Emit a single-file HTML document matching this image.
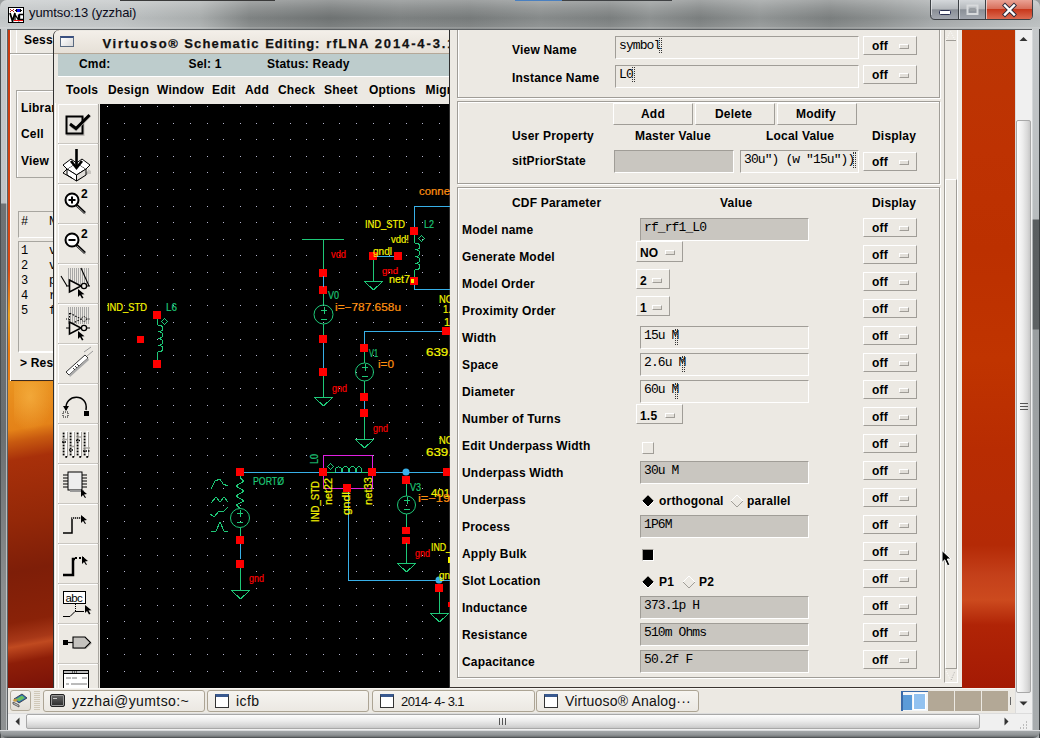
<!DOCTYPE html><html><head><meta charset="utf-8"><style>
*{margin:0;padding:0;box-sizing:border-box}
html,body{width:1040px;height:738px;overflow:hidden;background:#9a9e9f;font-family:"Liberation Sans",sans-serif}
div{position:absolute}
.t{white-space:pre;color:#000}
.b12{font:bold 12px/12px "Liberation Sans",sans-serif;letter-spacing:0.2px}
.m11{font:13px/12px "Liberation Mono",monospace;letter-spacing:-0.9px}
.r13{font:13px/13px "Liberation Sans",sans-serif}
</style></head><body><div style="left:0;top:0;width:1040px;height:738px;overflow:hidden">
<div style="left:0px;top:0px;width:1040px;height:738px;background:#9ea2a3;border-radius:7px 7px 0 0"></div>
<div style="left:0px;top:0px;width:1040px;height:30px;border-radius:7px 7px 0 0;background:linear-gradient(90deg,#c2c6c7 0,#bcc0c1 120px,#a8acac 200px,#7e8282 250px,#6e7272 330px,#7c8080 400px,#767a7a 470px,#868a8a 540px,#7a7e7e 610px,#8c9090 650px,#7a7e7e 700px,#909494 760px,#7a7e7e 830px,#8a8e8e 880px,#a0a4a5 930px,#b8bcbd 1040px)"></div>
<div style="left:0px;top:0px;width:1040px;height:30px;border-radius:7px 7px 0 0;background:linear-gradient(rgba(255,255,255,.3) 0,rgba(255,255,255,.15) 8px,rgba(255,255,255,0) 18px,rgba(255,255,255,.1) 27px,rgba(255,255,255,.35) 28px,rgba(255,255,255,0) 29px)"></div>
<div style="left:120px;top:0px;width:155px;height:1px;background:#3a3a3a"></div>
<div style="left:515px;top:0px;width:47px;height:1px;background:#4a80c0"></div>
<div style="left:562px;top:0px;width:110px;height:1px;background:#404244"></div>
<svg style="position:absolute;left:8px;top:7px" width="16" height="16" shape-rendering="crispEdges"><rect x="0.5" y="0.5" width="15" height="15" fill="#fff" stroke="#000"/><path d="M2,2h1M5,2h1M3,3h2M2,4h1M5,4h1" stroke="#b02020"/><path d="M7,3h2M12,3h2M8,2h5M8,4h5" stroke="#000"/><rect x="9" y="2" width="3" height="3" fill="#1010f0"/><path d="M2,6L4.5,14L7,6" fill="none" stroke="#000" stroke-width="1.8" shape-rendering="auto"/><path d="M7,13V7.5L10.5,13V7.5" fill="none" stroke="#000" stroke-width="1.3" shape-rendering="auto"/><path d="M15,7.5H11.5V12.5H15" fill="none" stroke="#000" stroke-width="1.4" shape-rendering="auto"/><rect x="6" y="13" width="9" height="1" fill="#f01010"/></svg>
<div class="t r13" style="left:29px;top:6px;color:#0a0a1a;letter-spacing:-0.1px">yumtso:13 (yzzhai)</div>
<svg style="position:absolute;left:928px;top:0" width="108" height="22"><defs><linearGradient id="cg" x1="0" y1="0" x2="0" y2="1"><stop offset="0" stop-color="#d4d7da"/><stop offset=".45" stop-color="#b4b8bc"/><stop offset=".5" stop-color="#8a8f96"/><stop offset="1" stop-color="#a4a8b0"/></linearGradient><linearGradient id="rg" x1="0" y1="0" x2="0" y2="1"><stop offset="0" stop-color="#eaa294"/><stop offset=".45" stop-color="#d8705c"/><stop offset=".5" stop-color="#c8381c"/><stop offset="1" stop-color="#dc6a50"/></linearGradient></defs><path d="M2.5,0 V15 Q2.5,19.5 7,19.5 H101 Q104.5,19.5 104.5,15 V0" fill="url(#cg)" stroke="#3c4044"/><path d="M57.5,0 V19 H101 Q104,19 104,15 V0Z" fill="url(#rg)"/><path d="M30.5,0V19.5 M57.5,0V19.5" stroke="#3c4044"/><path d="M31.5,0V19 M3.5,0V15 M58.5,0V19" stroke="#e8eaec" stroke-opacity=".7"/><rect x="11.5" y="10.5" width="11" height="4" rx="1" fill="#fff" stroke="#2a3050"/><rect x="39.5" y="5.5" width="10" height="8.5" fill="none" stroke="#d8dadc" stroke-width="2"/><rect x="41.5" y="8" width="6" height="3" fill="#9a9ea2"/><path d="M77,5.5 L86,14.5 M86,5.5 L77,14.5" stroke="#2a2a3a" stroke-width="4.2" stroke-linecap="square"/><path d="M77,5.5 L86,14.5 M86,5.5 L77,14.5" stroke="#fff" stroke-width="2.4" stroke-linecap="square"/></svg>
<div style="left:7px;top:29px;width:1026px;height:702px;background:#5c6063"></div>
<div style="left:8px;top:30px;width:1024px;height:700px;background:linear-gradient(90deg,#b23a12,#b93208)"></div>
<div style="left:8px;top:30px;width:3px;height:360px;background:linear-gradient(#c83a10 0,#d84a14 240px,#e8a020 285px,#e87a10 320px,#e8801a 100%)"></div>
<div style="left:8px;top:380px;width:46px;height:310px;background:linear-gradient(170deg,#ea9420 0,#e48218 50px,#c85a10 62px,#a8300a 80px,#942808 140px,#7e1e08 190px,#8a2208 240px,#a83818 258px,#c04a20 264px,#8e1e08 280px,#7a1208 310px)"></div>
<div style="left:14px;top:382px;width:40px;height:50px;background:radial-gradient(ellipse at 40% 30%,rgba(255,200,90,.45),rgba(255,200,90,0) 70%)"></div>
<div style="left:10px;top:30px;width:48px;height:351px;overflow:hidden;"><div style="left:-10px;top:-30px;width:1040px;height:738px">
<div style="left:10px;top:30px;width:48px;height:351px;background:#ece9e3;border-bottom:1px solid #3a2a20"></div>
<div style="left:10px;top:30px;width:1px;height:351px;background:#fff"></div>
<div class="t b12" style="left:24px;top:34px;">Sess</div>
<div style="left:16px;top:30px;width:1px;height:23px;background:#fff"></div>
<div style="left:10px;top:53px;width:44px;height:1px;background:#a8a6a0"></div>
<div style="left:10px;top:54px;width:44px;height:1px;background:#fff"></div>
<div style="left:16px;top:90px;width:38px;height:88px;border:1px solid #a8a6a0;border-right:none;box-shadow:inset 1px 1px 0 #fff"></div>
<div class="t b12" style="left:21px;top:102px;">Librar</div>
<div class="t b12" style="left:21px;top:128px;">Cell</div>
<div class="t b12" style="left:21px;top:155px;">View</div>
<div style="left:18px;top:211px;width:36px;height:27px;border:1px solid #a8a6a0;border-right:none;border-bottom:1px solid #fff"></div>
<div class="t m11" style="left:21px;top:216px;font-size:12px;line-height:12px;letter-spacing:-0.2px">#   N</div>
<div style="left:18px;top:241px;width:36px;height:112px;border:1px solid #a8a6a0;border-right:none;border-bottom:2px solid #fff"></div>
<div class="t m11" style="left:21px;top:245px;font-size:12px;line-height:12px;letter-spacing:-0.2px">1   v</div>
<div class="t m11" style="left:21px;top:260px;font-size:12px;line-height:12px;letter-spacing:-0.2px">2   v</div>
<div class="t m11" style="left:21px;top:275px;font-size:12px;line-height:12px;letter-spacing:-0.2px">3   p</div>
<div class="t m11" style="left:21px;top:290px;font-size:12px;line-height:12px;letter-spacing:-0.2px">4   r</div>
<div class="t m11" style="left:21px;top:305px;font-size:12px;line-height:12px;letter-spacing:-0.2px">5   f</div>
<div class="t b12" style="left:20px;top:357px;">> Res</div>
</div></div>
<div style="left:53px;top:30px;width:398px;height:659px;background:#ece9e3;border-left:1px solid #303030;border-radius:6px 0 0 0"></div>
<div style="left:54px;top:31px;width:396px;height:23px;background:linear-gradient(#f3efe9,#e6e0d7);border-bottom:1px solid #b5a898;border-radius:5px 0 0 0"></div>
<div style="left:60px;top:36px;width:14px;height:11px;background:linear-gradient(135deg,#fff,#d8d8d8);border:1px solid #5a6a80;border-top:2px solid #3a5080"></div>
<div class="t b12" style="left:102.5px;top:37px;font-size:13px;line-height:13px;letter-spacing:1.67px;color:#111;-webkit-text-stroke:0.25px #111">Virtuoso®</div>
<div class="t b12" style="left:184.3px;top:37px;font-size:13px;line-height:13px;letter-spacing:1.13px;color:#111;-webkit-text-stroke:0.25px #111">Schematic</div>
<div class="t b12" style="left:265.3px;top:37px;font-size:13px;line-height:13px;letter-spacing:0.8px;color:#111;-webkit-text-stroke:0.25px #111">Editing:</div>
<div class="t b12" style="left:326.2px;top:37px;font-size:13px;line-height:13px;letter-spacing:1.5px;color:#111;-webkit-text-stroke:0.25px #111">rfLNA</div>
<div class="t b12" style="left:374.7px;top:37px;font-size:13px;line-height:13px;letter-spacing:1.88px;color:#111;-webkit-text-stroke:0.25px #111">2014-4-3.1</div>
<div style="left:58px;top:54px;width:392px;height:22px;background:#bdcccc"></div>
<div class="t b12" style="left:79px;top:58px;">Cmd:</div>
<div class="t b12" style="left:188.5px;top:58px;">Sel: 1</div>
<div class="t b12" style="left:267px;top:58px;">Status: Ready</div>
<div style="left:58px;top:76px;width:392px;height:27px;background:#ece9e3;border-top:1px solid #fff"></div>
<div class="t b12" style="left:66px;top:84px;">Tools</div>
<div class="t b12" style="left:108px;top:84px;">Design</div>
<div class="t b12" style="left:157px;top:84px;">Window</div>
<div class="t b12" style="left:212px;top:84px;">Edit</div>
<div class="t b12" style="left:245px;top:84px;">Add</div>
<div class="t b12" style="left:278px;top:84px;">Check</div>
<div class="t b12" style="left:324px;top:84px;">Sheet</div>
<div class="t b12" style="left:369px;top:84px;">Options</div>
<div class="t b12" style="left:425.5px;top:84px;">Migr</div>
<div style="left:54px;top:103px;width:46px;height:586px;background:#ece9e3"></div>
<div style="left:55px;top:103px;width:1px;height:586px;background:#fff"></div>
<svg style="position:absolute;left:54px;top:103px" width="46" height="585"><g transform="translate(-54,-103)"><rect x="58.5" y="103.5" width="39" height="40" fill="#ece9e3" stroke="none"/><path d="M58.5,143 V104.5 H97.5" fill="none" stroke="#fff"/><path d="M58,143.5 H98.5 V104" fill="none" stroke="#a8a59f"/><rect x="58.5" y="143.5" width="39" height="40" fill="#ece9e3" stroke="none"/><path d="M58.5,183 V144.5 H97.5" fill="none" stroke="#fff"/><path d="M58,183.5 H98.5 V144" fill="none" stroke="#a8a59f"/><rect x="58.5" y="183.5" width="39" height="40" fill="#ece9e3" stroke="none"/><path d="M58.5,223 V184.5 H97.5" fill="none" stroke="#fff"/><path d="M58,223.5 H98.5 V184" fill="none" stroke="#a8a59f"/><rect x="58.5" y="223.5" width="39" height="40" fill="#ece9e3" stroke="none"/><path d="M58.5,263 V224.5 H97.5" fill="none" stroke="#fff"/><path d="M58,263.5 H98.5 V224" fill="none" stroke="#a8a59f"/><rect x="58.5" y="263.5" width="39" height="40" fill="#ece9e3" stroke="none"/><path d="M58.5,303 V264.5 H97.5" fill="none" stroke="#fff"/><path d="M58,303.5 H98.5 V264" fill="none" stroke="#a8a59f"/><rect x="58.5" y="303.5" width="39" height="40" fill="#ece9e3" stroke="none"/><path d="M58.5,343 V304.5 H97.5" fill="none" stroke="#fff"/><path d="M58,343.5 H98.5 V304" fill="none" stroke="#a8a59f"/><rect x="58.5" y="343.5" width="39" height="40" fill="#ece9e3" stroke="none"/><path d="M58.5,383 V344.5 H97.5" fill="none" stroke="#fff"/><path d="M58,383.5 H98.5 V344" fill="none" stroke="#a8a59f"/><rect x="58.5" y="383.5" width="39" height="40" fill="#ece9e3" stroke="none"/><path d="M58.5,423 V384.5 H97.5" fill="none" stroke="#fff"/><path d="M58,423.5 H98.5 V384" fill="none" stroke="#a8a59f"/><rect x="58.5" y="423.5" width="39" height="40" fill="#ece9e3" stroke="none"/><path d="M58.5,463 V424.5 H97.5" fill="none" stroke="#fff"/><path d="M58,463.5 H98.5 V424" fill="none" stroke="#a8a59f"/><rect x="58.5" y="463.5" width="39" height="40" fill="#ece9e3" stroke="none"/><path d="M58.5,503 V464.5 H97.5" fill="none" stroke="#fff"/><path d="M58,503.5 H98.5 V464" fill="none" stroke="#a8a59f"/><rect x="58.5" y="503.5" width="39" height="40" fill="#ece9e3" stroke="none"/><path d="M58.5,543 V504.5 H97.5" fill="none" stroke="#fff"/><path d="M58,543.5 H98.5 V504" fill="none" stroke="#a8a59f"/><rect x="58.5" y="543.5" width="39" height="40" fill="#ece9e3" stroke="none"/><path d="M58.5,583 V544.5 H97.5" fill="none" stroke="#fff"/><path d="M58,583.5 H98.5 V544" fill="none" stroke="#a8a59f"/><rect x="58.5" y="583.5" width="39" height="40" fill="#ece9e3" stroke="none"/><path d="M58.5,623 V584.5 H97.5" fill="none" stroke="#fff"/><path d="M58,623.5 H98.5 V584" fill="none" stroke="#a8a59f"/><rect x="58.5" y="623.5" width="39" height="40" fill="#ece9e3" stroke="none"/><path d="M58.5,663 V624.5 H97.5" fill="none" stroke="#fff"/><path d="M58,663.5 H98.5 V624" fill="none" stroke="#a8a59f"/><rect x="58.5" y="663.5" width="39" height="40" fill="#ece9e3" stroke="none"/><path d="M58.5,703 V664.5 H97.5" fill="none" stroke="#fff"/><path d="M58,703.5 H98.5 V664" fill="none" stroke="#a8a59f"/><g transform="translate(58,103)"><g transform="translate(0,1.5)"><rect x="9.5" y="13.5" width="16" height="17" fill="none" stroke="#c0bdb8" stroke-width="2"/><rect x="8.5" y="12" width="16" height="17" fill="#e4e1dc" stroke="#000" stroke-width="2"/><path d="M13,21 L18,25 L32,11" fill="none" stroke="#b0ada8" stroke-width="3"/><path d="M12,19.5 L18,24 L31.5,10.5" fill="none" stroke="#000" stroke-width="3"/></g></g><g transform="translate(58,143)"><path d="M20,34 L30,28 L30,31 L20,38Z" fill="#b8b5b0"/><path d="M30,26 L33,28 L33,31 L30,31Z" fill="#c8c5c0"/><path d="M9,26 L18.5,20 L28,26 L18.5,32Z" fill="#fff" stroke="#000"/><path d="M9,26 L18.5,32 L18.5,38 L9,32Z" fill="#fff" stroke="#000"/><path d="M18.5,32 L28,26 L28,32 L18.5,38Z" fill="#e0ddd8" stroke="#000"/><path d="M9,26 L5,22 L13,16 L18.5,20" fill="#fff" stroke="#000"/><path d="M28,26 L32,22 L24,16 L18.5,20" fill="#fff" stroke="#000"/><path d="M9,26 L5,30 L14,35" fill="none" stroke="#000"/><path d="M18.5,6 V24" stroke="#000" stroke-width="2.6"/><path d="M13,18 L18.5,25 L24,18" fill="none" stroke="#000" stroke-width="2.6"/></g><g transform="translate(58,183)"><circle cx="14" cy="17" r="6.5" fill="#fff" stroke="#000" stroke-width="2"/><path d="M18.5,22 L27,30" stroke="#000" stroke-width="2.5"/><path d="M19,23 L27.5,31" stroke="#999" stroke-width="1"/><path d="M10.5,17 H17.5" stroke="#000" stroke-width="2"/><path d="M14,13.5 V20.5" stroke="#000" stroke-width="2"/><text x="23" y="15" font-family="Liberation Sans" font-weight="bold" font-size="12" fill="#000">2</text></g><g transform="translate(58,223)"><circle cx="14" cy="17" r="6.5" fill="#fff" stroke="#000" stroke-width="2"/><path d="M18.5,22 L27,30" stroke="#000" stroke-width="2.5"/><path d="M19,23 L27.5,31" stroke="#999" stroke-width="1"/><path d="M10.5,17 H17.5" stroke="#000" stroke-width="2"/><text x="23" y="15" font-family="Liberation Sans" font-weight="bold" font-size="12" fill="#000">2</text></g><g transform="translate(58,263)"><line x1="10.5" y1="5" x2="10.5" y2="23" stroke="#a0a0a0" stroke-width="0.9"/><line x1="12.5" y1="5" x2="12.5" y2="23" stroke="#a0a0a0" stroke-width="0.9"/><line x1="14.5" y1="5" x2="14.5" y2="23" stroke="#a0a0a0" stroke-width="0.9"/><line x1="16.5" y1="5" x2="16.5" y2="23" stroke="#a0a0a0" stroke-width="0.9"/><line x1="18.5" y1="5" x2="18.5" y2="23" stroke="#a0a0a0" stroke-width="0.9"/><line x1="20.5" y1="5" x2="20.5" y2="23" stroke="#a0a0a0" stroke-width="0.9"/><line x1="22.5" y1="5" x2="22.5" y2="23" stroke="#a0a0a0" stroke-width="0.9"/><line x1="24.5" y1="5" x2="24.5" y2="23" stroke="#a0a0a0" stroke-width="0.9"/><line x1="26.5" y1="5" x2="26.5" y2="23" stroke="#a0a0a0" stroke-width="0.9"/><line x1="28.5" y1="5" x2="28.5" y2="23" stroke="#a0a0a0" stroke-width="0.9"/><line x1="30.5" y1="5" x2="30.5" y2="23" stroke="#a0a0a0" stroke-width="0.9"/><path d="M3,13 L9,23 M23,5 L31,23" stroke="#000" stroke-width="1.1"/><path d="M11.5,17 V29 L23,23Z" fill="#ece9e3" stroke="#000" stroke-width="1.6"/><circle cx="26" cy="23" r="2.6" fill="#ece9e3" stroke="#000" stroke-width="1.3"/><path d="M8,23 H11 M28.5,23 H32" stroke="#000" stroke-width="1.2"/><path d="M20,26 L20,34 L22,32 L24,35.5 L25.5,34.8 L23.5,31.5 L26.5,31.2Z" fill="#000"/></g><g transform="translate(58,303)"><line x1="10.5" y1="4" x2="10.5" y2="21" stroke="#a0a0a0" stroke-width="0.9"/><line x1="12.5" y1="4" x2="12.5" y2="21" stroke="#a0a0a0" stroke-width="0.9"/><line x1="14.5" y1="4" x2="14.5" y2="21" stroke="#a0a0a0" stroke-width="0.9"/><line x1="16.5" y1="4" x2="16.5" y2="21" stroke="#a0a0a0" stroke-width="0.9"/><line x1="18.5" y1="4" x2="18.5" y2="21" stroke="#a0a0a0" stroke-width="0.9"/><line x1="20.5" y1="4" x2="20.5" y2="21" stroke="#a0a0a0" stroke-width="0.9"/><line x1="22.5" y1="4" x2="22.5" y2="21" stroke="#a0a0a0" stroke-width="0.9"/><line x1="24.5" y1="4" x2="24.5" y2="21" stroke="#a0a0a0" stroke-width="0.9"/><line x1="26.5" y1="4" x2="26.5" y2="21" stroke="#a0a0a0" stroke-width="0.9"/><line x1="28.5" y1="4" x2="28.5" y2="21" stroke="#a0a0a0" stroke-width="0.9"/><line x1="30.5" y1="4" x2="30.5" y2="21" stroke="#a0a0a0" stroke-width="0.9"/><path d="M11.5,10 V22 L23,16Z" fill="none" stroke="#000" stroke-width="1.1" stroke-dasharray="1.5,1.5"/><circle cx="26" cy="16" r="2.4" fill="none" stroke="#000" stroke-dasharray="1,1"/><path d="M8,16 H11 M28.5,16 H32" stroke="#000" stroke-dasharray="1,1"/><path d="M11.5,19 V31 L23,25Z" fill="#ece9e3" stroke="#000" stroke-width="1.6"/><circle cx="26" cy="25" r="2.6" fill="#ece9e3" stroke="#000" stroke-width="1.3"/><path d="M8,25 H11 M28.5,25 H32" stroke="#000" stroke-width="1.2"/><path d="M20,28 L20,36 L22,34 L24,37.5 L25.5,36.8 L23.5,33.5 L26.5,33.2Z" fill="#000"/></g><g transform="translate(58,343)"><path d="M8,29 L27,12 L30,15 L11,32Z" fill="#fff" stroke="#333"/><path d="M11,32 L30,15 L31,17 L12,34Z" fill="#aaa"/><path d="M26,9 L33,4 M29,13 L35,8" stroke="#999"/><path d="M15,25 l2,2 M17,23 l2,2 M19,21 l2,2" stroke="#333"/></g><g transform="translate(58,383)"><path d="M8,27 C6,10 31,10 28,27" fill="none" stroke="#000" stroke-width="1.5"/><path d="M5,23 L8,28 L11,23Z" fill="#000"/><rect x="5" y="29" width="5" height="5" fill="none" stroke="#000" stroke-dasharray="1,1"/><rect x="26" y="28" width="5" height="5" fill="#000"/></g><g transform="translate(58,423)"><rect x="7.5" y="8" width="2" height="26" fill="#fff"/><rect x="9.0" y="9" width="1" height="25" fill="#a8a5a0"/><rect x="4.7" y="9.6" width="1.8" height="1.8" fill="#000"/><rect x="4.7" y="12.6" width="1.8" height="1.8" fill="#000"/><rect x="4.7" y="15.6" width="1.8" height="1.8" fill="#000"/><rect x="4.7" y="18.6" width="1.8" height="1.8" fill="#000"/><rect x="4.7" y="21.6" width="1.8" height="1.8" fill="#000"/><rect x="4.7" y="24.6" width="1.8" height="1.8" fill="#000"/><rect x="4.7" y="27.6" width="1.8" height="1.8" fill="#000"/><rect x="4.7" y="30.6" width="1.8" height="1.8" fill="#000"/><rect x="7.3" y="33" width="1.8" height="1.8" fill="#000"/><rect x="14.5" y="8" width="2" height="26" fill="#fff"/><rect x="16.0" y="9" width="1" height="25" fill="#a8a5a0"/><rect x="11.7" y="9.6" width="1.8" height="1.8" fill="#000"/><rect x="11.7" y="12.6" width="1.8" height="1.8" fill="#000"/><rect x="11.7" y="15.6" width="1.8" height="1.8" fill="#000"/><rect x="11.7" y="18.6" width="1.8" height="1.8" fill="#000"/><rect x="11.7" y="21.6" width="1.8" height="1.8" fill="#000"/><rect x="11.7" y="24.6" width="1.8" height="1.8" fill="#000"/><rect x="11.7" y="27.6" width="1.8" height="1.8" fill="#000"/><rect x="11.7" y="30.6" width="1.8" height="1.8" fill="#000"/><rect x="14.3" y="33" width="1.8" height="1.8" fill="#000"/><rect x="21.5" y="8" width="2" height="26" fill="#fff"/><rect x="23.0" y="9" width="1" height="25" fill="#a8a5a0"/><rect x="18.7" y="9.6" width="1.8" height="1.8" fill="#000"/><rect x="18.7" y="12.6" width="1.8" height="1.8" fill="#000"/><rect x="18.7" y="15.6" width="1.8" height="1.8" fill="#000"/><rect x="18.7" y="18.6" width="1.8" height="1.8" fill="#000"/><rect x="18.7" y="21.6" width="1.8" height="1.8" fill="#000"/><rect x="18.7" y="24.6" width="1.8" height="1.8" fill="#000"/><rect x="18.7" y="27.6" width="1.8" height="1.8" fill="#000"/><rect x="18.7" y="30.6" width="1.8" height="1.8" fill="#000"/><rect x="21.3" y="33" width="1.8" height="1.8" fill="#000"/><rect x="28.5" y="8" width="2" height="26" fill="#fff"/><rect x="30.0" y="9" width="1" height="25" fill="#a8a5a0"/><rect x="25.7" y="9.6" width="1.8" height="1.8" fill="#000"/><rect x="25.7" y="12.6" width="1.8" height="1.8" fill="#000"/><rect x="25.7" y="15.6" width="1.8" height="1.8" fill="#000"/><rect x="25.7" y="18.6" width="1.8" height="1.8" fill="#000"/><rect x="25.7" y="21.6" width="1.8" height="1.8" fill="#000"/><rect x="25.7" y="24.6" width="1.8" height="1.8" fill="#000"/><rect x="25.7" y="27.6" width="1.8" height="1.8" fill="#000"/><rect x="25.7" y="30.6" width="1.8" height="1.8" fill="#000"/><rect x="28.3" y="33" width="1.8" height="1.8" fill="#000"/><path d="M5,16.5 H10 M12,23.5 H17 M19,14 H24 M26,25 H32" stroke="#a8a5a0" stroke-width="1.5"/><path d="M4,19 H9 M11,27 H16 M18,17.5 H23 M25,28 H32" stroke="#000" stroke-width="1.6" stroke-dasharray="1.5,1"/></g><g transform="translate(58,463)"><rect x="10" y="9" width="14" height="18" fill="#eee" stroke="#000" stroke-width="1"/><rect x="12" y="27" width="14" height="2" fill="#999"/><path d="M5,12 H10 M24,12 H29" stroke="#000"/><path d="M5,15 H10 M24,15 H29" stroke="#000"/><path d="M5,18 H10 M24,18 H29" stroke="#000"/><path d="M5,21 H10 M24,21 H29" stroke="#000"/><path d="M5,24 H10 M24,24 H29" stroke="#000"/><path d="M23,26 L23,34 L25,32 L27,35 L28,34.5 L26,31.5 L29,31Z" fill="#000"/></g><g transform="translate(58,503)"><path d="M5,30 H14 V15 H26" fill="none" stroke="#000" stroke-width="1.5"/><path d="M14,15 H26" stroke="#ece9e3" stroke-width="1.5" stroke-dasharray="1,1"/><path d="M23,12 L23,20 L25,18 L27,21 L28,20.5 L26,17.5 L29,17Z" fill="#000"/></g><g transform="translate(58,543)"><path d="M5,32 H15 V16 H17" fill="none" stroke="#000" stroke-width="2.5"/><path d="M17,15 H26" stroke="#000" stroke-width="2" stroke-dasharray="2,2"/><path d="M24,13 L24,21 L26,19 L28,22 L29,21.5 L27,18.5 L30,18Z" fill="#000"/></g><g transform="translate(58,583)"><rect x="5.5" y="8.5" width="22" height="12" fill="#fff" stroke="#000"/><text x="7.5" y="18.5" font-family="Liberation Sans" font-size="11.5" letter-spacing="-0.6" fill="#000">abc</text><path d="M17.5,21 V28" stroke="#000" stroke-dasharray="1,1"/><path d="M5,33.5 H12 L17,28.5 H26" fill="none" stroke="#000"/><path d="M27,22 L27,30 L29,28 L31,31.5 L32.5,30.8 L30.5,27.5 L33.5,27.2Z" fill="#000"/></g><g transform="translate(58,623)"><path d="M16,15 H28 L34,20.5 L28,26 H16Z" fill="#b8b5b0"/><rect x="5" y="17" width="5" height="5" fill="#000"/><path d="M10,19.5 H15" stroke="#000" stroke-width="1.2"/><path d="M15,14 H27 L32.5,19.5 L27,25 H15Z" fill="#c4c2be" stroke="#000" stroke-width="1.1"/></g><g transform="translate(58,663)"><rect x="5.5" y="7.5" width="25" height="30" fill="#fff" stroke="#000"/><rect x="5.5" y="7.5" width="25" height="3" fill="#bbb" stroke="#000"/><path d="M14,9 h1 M16,9 h1 M18,9 h1" stroke="#000"/><path d="M8,15 H13 M14,15 H19 M24,15 H29 M8,21 H11 M13,21 H29 M8,26 H11 M13,26 H29" stroke="#777"/></g></g></svg>
<div style="left:100px;top:104px;width:349px;height:584px;background:#000"></div>
<div style="left:449px;top:30px;width:1px;height:658px;background:#2e2e2e"></div>
<svg style="position:absolute;left:100px;top:104px" width="350" height="584"><g transform="translate(-100,-104)" shape-rendering="crispEdges"><rect x="107" y="106" width="1" height="1" fill="#ffffff"/><rect x="124" y="106" width="1" height="1" fill="#b4b4cc"/><rect x="140" y="106" width="1" height="1" fill="#b4b4cc"/><rect x="157" y="106" width="1" height="1" fill="#b4b4cc"/><rect x="173" y="106" width="1" height="1" fill="#b4b4cc"/><rect x="190" y="106" width="1" height="1" fill="#b4b4cc"/><rect x="207" y="106" width="1" height="1" fill="#b4b4cc"/><rect x="223" y="106" width="1" height="1" fill="#b4b4cc"/><rect x="240" y="106" width="1" height="1" fill="#b4b4cc"/><rect x="256" y="106" width="1" height="1" fill="#b4b4cc"/><rect x="273" y="106" width="1" height="1" fill="#b4b4cc"/><rect x="290" y="106" width="1" height="1" fill="#b4b4cc"/><rect x="306" y="106" width="1" height="1" fill="#b4b4cc"/><rect x="323" y="106" width="1" height="1" fill="#b4b4cc"/><rect x="339" y="106" width="1" height="1" fill="#b4b4cc"/><rect x="356" y="106" width="1" height="1" fill="#b4b4cc"/><rect x="373" y="106" width="1" height="1" fill="#ffffff"/><rect x="389" y="106" width="1" height="1" fill="#b4b4cc"/><rect x="406" y="106" width="1" height="1" fill="#b4b4cc"/><rect x="422" y="106" width="1" height="1" fill="#b4b4cc"/><rect x="439" y="106" width="1" height="1" fill="#b4b4cc"/><rect x="107" y="123" width="1" height="1" fill="#b4b4cc"/><rect x="124" y="123" width="1" height="1" fill="#b4b4cc"/><rect x="140" y="123" width="1" height="1" fill="#b4b4cc"/><rect x="157" y="123" width="1" height="1" fill="#b4b4cc"/><rect x="173" y="123" width="1" height="1" fill="#b4b4cc"/><rect x="190" y="123" width="1" height="1" fill="#b4b4cc"/><rect x="207" y="123" width="1" height="1" fill="#b4b4cc"/><rect x="223" y="123" width="1" height="1" fill="#b4b4cc"/><rect x="240" y="123" width="1" height="1" fill="#b4b4cc"/><rect x="256" y="123" width="1" height="1" fill="#b4b4cc"/><rect x="273" y="123" width="1" height="1" fill="#b4b4cc"/><rect x="290" y="123" width="1" height="1" fill="#b4b4cc"/><rect x="306" y="123" width="1" height="1" fill="#b4b4cc"/><rect x="323" y="123" width="1" height="1" fill="#b4b4cc"/><rect x="339" y="123" width="1" height="1" fill="#b4b4cc"/><rect x="356" y="123" width="1" height="1" fill="#b4b4cc"/><rect x="373" y="123" width="1" height="1" fill="#b4b4cc"/><rect x="389" y="123" width="1" height="1" fill="#b4b4cc"/><rect x="406" y="123" width="1" height="1" fill="#b4b4cc"/><rect x="422" y="123" width="1" height="1" fill="#b4b4cc"/><rect x="439" y="123" width="1" height="1" fill="#b4b4cc"/><rect x="107" y="139" width="1" height="1" fill="#b4b4cc"/><rect x="124" y="139" width="1" height="1" fill="#b4b4cc"/><rect x="140" y="139" width="1" height="1" fill="#b4b4cc"/><rect x="157" y="139" width="1" height="1" fill="#b4b4cc"/><rect x="173" y="139" width="1" height="1" fill="#b4b4cc"/><rect x="190" y="139" width="1" height="1" fill="#b4b4cc"/><rect x="207" y="139" width="1" height="1" fill="#b4b4cc"/><rect x="223" y="139" width="1" height="1" fill="#b4b4cc"/><rect x="240" y="139" width="1" height="1" fill="#b4b4cc"/><rect x="256" y="139" width="1" height="1" fill="#b4b4cc"/><rect x="273" y="139" width="1" height="1" fill="#b4b4cc"/><rect x="290" y="139" width="1" height="1" fill="#b4b4cc"/><rect x="306" y="139" width="1" height="1" fill="#b4b4cc"/><rect x="323" y="139" width="1" height="1" fill="#b4b4cc"/><rect x="339" y="139" width="1" height="1" fill="#b4b4cc"/><rect x="356" y="139" width="1" height="1" fill="#b4b4cc"/><rect x="373" y="139" width="1" height="1" fill="#b4b4cc"/><rect x="389" y="139" width="1" height="1" fill="#b4b4cc"/><rect x="406" y="139" width="1" height="1" fill="#b4b4cc"/><rect x="422" y="139" width="1" height="1" fill="#b4b4cc"/><rect x="439" y="139" width="1" height="1" fill="#b4b4cc"/><rect x="107" y="156" width="1" height="1" fill="#b4b4cc"/><rect x="124" y="156" width="1" height="1" fill="#b4b4cc"/><rect x="140" y="156" width="1" height="1" fill="#b4b4cc"/><rect x="157" y="156" width="1" height="1" fill="#b4b4cc"/><rect x="173" y="156" width="1" height="1" fill="#b4b4cc"/><rect x="190" y="156" width="1" height="1" fill="#b4b4cc"/><rect x="207" y="156" width="1" height="1" fill="#b4b4cc"/><rect x="223" y="156" width="1" height="1" fill="#b4b4cc"/><rect x="240" y="156" width="1" height="1" fill="#b4b4cc"/><rect x="256" y="156" width="1" height="1" fill="#b4b4cc"/><rect x="273" y="156" width="1" height="1" fill="#b4b4cc"/><rect x="290" y="156" width="1" height="1" fill="#b4b4cc"/><rect x="306" y="156" width="1" height="1" fill="#b4b4cc"/><rect x="323" y="156" width="1" height="1" fill="#b4b4cc"/><rect x="339" y="156" width="1" height="1" fill="#b4b4cc"/><rect x="356" y="156" width="1" height="1" fill="#b4b4cc"/><rect x="373" y="156" width="1" height="1" fill="#b4b4cc"/><rect x="389" y="156" width="1" height="1" fill="#b4b4cc"/><rect x="406" y="156" width="1" height="1" fill="#b4b4cc"/><rect x="422" y="156" width="1" height="1" fill="#b4b4cc"/><rect x="439" y="156" width="1" height="1" fill="#b4b4cc"/><rect x="107" y="172" width="1" height="1" fill="#b4b4cc"/><rect x="124" y="172" width="1" height="1" fill="#b4b4cc"/><rect x="140" y="172" width="1" height="1" fill="#b4b4cc"/><rect x="157" y="172" width="1" height="1" fill="#b4b4cc"/><rect x="173" y="172" width="1" height="1" fill="#b4b4cc"/><rect x="190" y="172" width="1" height="1" fill="#b4b4cc"/><rect x="207" y="172" width="1" height="1" fill="#b4b4cc"/><rect x="223" y="172" width="1" height="1" fill="#b4b4cc"/><rect x="240" y="172" width="1" height="1" fill="#b4b4cc"/><rect x="256" y="172" width="1" height="1" fill="#b4b4cc"/><rect x="273" y="172" width="1" height="1" fill="#b4b4cc"/><rect x="290" y="172" width="1" height="1" fill="#b4b4cc"/><rect x="306" y="172" width="1" height="1" fill="#b4b4cc"/><rect x="323" y="172" width="1" height="1" fill="#b4b4cc"/><rect x="339" y="172" width="1" height="1" fill="#b4b4cc"/><rect x="356" y="172" width="1" height="1" fill="#b4b4cc"/><rect x="373" y="172" width="1" height="1" fill="#b4b4cc"/><rect x="389" y="172" width="1" height="1" fill="#b4b4cc"/><rect x="406" y="172" width="1" height="1" fill="#b4b4cc"/><rect x="422" y="172" width="1" height="1" fill="#b4b4cc"/><rect x="439" y="172" width="1" height="1" fill="#b4b4cc"/><rect x="107" y="189" width="1" height="1" fill="#b4b4cc"/><rect x="124" y="189" width="1" height="1" fill="#b4b4cc"/><rect x="140" y="189" width="1" height="1" fill="#b4b4cc"/><rect x="157" y="189" width="1" height="1" fill="#b4b4cc"/><rect x="173" y="189" width="1" height="1" fill="#b4b4cc"/><rect x="190" y="189" width="1" height="1" fill="#b4b4cc"/><rect x="207" y="189" width="1" height="1" fill="#b4b4cc"/><rect x="223" y="189" width="1" height="1" fill="#b4b4cc"/><rect x="240" y="189" width="1" height="1" fill="#b4b4cc"/><rect x="256" y="189" width="1" height="1" fill="#b4b4cc"/><rect x="273" y="189" width="1" height="1" fill="#b4b4cc"/><rect x="290" y="189" width="1" height="1" fill="#b4b4cc"/><rect x="306" y="189" width="1" height="1" fill="#b4b4cc"/><rect x="323" y="189" width="1" height="1" fill="#b4b4cc"/><rect x="339" y="189" width="1" height="1" fill="#b4b4cc"/><rect x="356" y="189" width="1" height="1" fill="#b4b4cc"/><rect x="373" y="189" width="1" height="1" fill="#b4b4cc"/><rect x="389" y="189" width="1" height="1" fill="#b4b4cc"/><rect x="406" y="189" width="1" height="1" fill="#b4b4cc"/><rect x="422" y="189" width="1" height="1" fill="#b4b4cc"/><rect x="439" y="189" width="1" height="1" fill="#b4b4cc"/><rect x="107" y="206" width="1" height="1" fill="#b4b4cc"/><rect x="124" y="206" width="1" height="1" fill="#b4b4cc"/><rect x="140" y="206" width="1" height="1" fill="#b4b4cc"/><rect x="157" y="206" width="1" height="1" fill="#b4b4cc"/><rect x="173" y="206" width="1" height="1" fill="#b4b4cc"/><rect x="190" y="206" width="1" height="1" fill="#b4b4cc"/><rect x="207" y="206" width="1" height="1" fill="#b4b4cc"/><rect x="223" y="206" width="1" height="1" fill="#b4b4cc"/><rect x="240" y="206" width="1" height="1" fill="#b4b4cc"/><rect x="256" y="206" width="1" height="1" fill="#b4b4cc"/><rect x="273" y="206" width="1" height="1" fill="#b4b4cc"/><rect x="290" y="206" width="1" height="1" fill="#b4b4cc"/><rect x="306" y="206" width="1" height="1" fill="#b4b4cc"/><rect x="323" y="206" width="1" height="1" fill="#b4b4cc"/><rect x="339" y="206" width="1" height="1" fill="#b4b4cc"/><rect x="356" y="206" width="1" height="1" fill="#b4b4cc"/><rect x="373" y="206" width="1" height="1" fill="#b4b4cc"/><rect x="389" y="206" width="1" height="1" fill="#b4b4cc"/><rect x="406" y="206" width="1" height="1" fill="#b4b4cc"/><rect x="422" y="206" width="1" height="1" fill="#b4b4cc"/><rect x="439" y="206" width="1" height="1" fill="#b4b4cc"/><rect x="107" y="222" width="1" height="1" fill="#b4b4cc"/><rect x="124" y="222" width="1" height="1" fill="#b4b4cc"/><rect x="140" y="222" width="1" height="1" fill="#b4b4cc"/><rect x="157" y="222" width="1" height="1" fill="#b4b4cc"/><rect x="173" y="222" width="1" height="1" fill="#b4b4cc"/><rect x="190" y="222" width="1" height="1" fill="#b4b4cc"/><rect x="207" y="222" width="1" height="1" fill="#b4b4cc"/><rect x="223" y="222" width="1" height="1" fill="#b4b4cc"/><rect x="240" y="222" width="1" height="1" fill="#b4b4cc"/><rect x="256" y="222" width="1" height="1" fill="#b4b4cc"/><rect x="273" y="222" width="1" height="1" fill="#b4b4cc"/><rect x="290" y="222" width="1" height="1" fill="#b4b4cc"/><rect x="306" y="222" width="1" height="1" fill="#b4b4cc"/><rect x="323" y="222" width="1" height="1" fill="#b4b4cc"/><rect x="339" y="222" width="1" height="1" fill="#b4b4cc"/><rect x="356" y="222" width="1" height="1" fill="#b4b4cc"/><rect x="373" y="222" width="1" height="1" fill="#b4b4cc"/><rect x="389" y="222" width="1" height="1" fill="#b4b4cc"/><rect x="406" y="222" width="1" height="1" fill="#b4b4cc"/><rect x="422" y="222" width="1" height="1" fill="#b4b4cc"/><rect x="439" y="222" width="1" height="1" fill="#b4b4cc"/><rect x="107" y="239" width="1" height="1" fill="#b4b4cc"/><rect x="124" y="239" width="1" height="1" fill="#b4b4cc"/><rect x="140" y="239" width="1" height="1" fill="#b4b4cc"/><rect x="157" y="239" width="1" height="1" fill="#b4b4cc"/><rect x="173" y="239" width="1" height="1" fill="#b4b4cc"/><rect x="190" y="239" width="1" height="1" fill="#b4b4cc"/><rect x="207" y="239" width="1" height="1" fill="#b4b4cc"/><rect x="223" y="239" width="1" height="1" fill="#b4b4cc"/><rect x="240" y="239" width="1" height="1" fill="#b4b4cc"/><rect x="256" y="239" width="1" height="1" fill="#b4b4cc"/><rect x="273" y="239" width="1" height="1" fill="#b4b4cc"/><rect x="290" y="239" width="1" height="1" fill="#b4b4cc"/><rect x="306" y="239" width="1" height="1" fill="#b4b4cc"/><rect x="323" y="239" width="1" height="1" fill="#b4b4cc"/><rect x="339" y="239" width="1" height="1" fill="#b4b4cc"/><rect x="356" y="239" width="1" height="1" fill="#b4b4cc"/><rect x="373" y="239" width="1" height="1" fill="#b4b4cc"/><rect x="389" y="239" width="1" height="1" fill="#b4b4cc"/><rect x="406" y="239" width="1" height="1" fill="#b4b4cc"/><rect x="422" y="239" width="1" height="1" fill="#b4b4cc"/><rect x="439" y="239" width="1" height="1" fill="#b4b4cc"/><rect x="107" y="255" width="1" height="1" fill="#b4b4cc"/><rect x="124" y="255" width="1" height="1" fill="#b4b4cc"/><rect x="140" y="255" width="1" height="1" fill="#b4b4cc"/><rect x="157" y="255" width="1" height="1" fill="#b4b4cc"/><rect x="173" y="255" width="1" height="1" fill="#b4b4cc"/><rect x="190" y="255" width="1" height="1" fill="#b4b4cc"/><rect x="207" y="255" width="1" height="1" fill="#b4b4cc"/><rect x="223" y="255" width="1" height="1" fill="#b4b4cc"/><rect x="240" y="255" width="1" height="1" fill="#b4b4cc"/><rect x="256" y="255" width="1" height="1" fill="#b4b4cc"/><rect x="273" y="255" width="1" height="1" fill="#b4b4cc"/><rect x="290" y="255" width="1" height="1" fill="#b4b4cc"/><rect x="306" y="255" width="1" height="1" fill="#b4b4cc"/><rect x="323" y="255" width="1" height="1" fill="#b4b4cc"/><rect x="339" y="255" width="1" height="1" fill="#b4b4cc"/><rect x="356" y="255" width="1" height="1" fill="#b4b4cc"/><rect x="373" y="255" width="1" height="1" fill="#b4b4cc"/><rect x="389" y="255" width="1" height="1" fill="#b4b4cc"/><rect x="406" y="255" width="1" height="1" fill="#b4b4cc"/><rect x="422" y="255" width="1" height="1" fill="#b4b4cc"/><rect x="439" y="255" width="1" height="1" fill="#b4b4cc"/><rect x="107" y="272" width="1" height="1" fill="#b4b4cc"/><rect x="124" y="272" width="1" height="1" fill="#b4b4cc"/><rect x="140" y="272" width="1" height="1" fill="#b4b4cc"/><rect x="157" y="272" width="1" height="1" fill="#b4b4cc"/><rect x="173" y="272" width="1" height="1" fill="#b4b4cc"/><rect x="190" y="272" width="1" height="1" fill="#b4b4cc"/><rect x="207" y="272" width="1" height="1" fill="#b4b4cc"/><rect x="223" y="272" width="1" height="1" fill="#b4b4cc"/><rect x="240" y="272" width="1" height="1" fill="#b4b4cc"/><rect x="256" y="272" width="1" height="1" fill="#b4b4cc"/><rect x="273" y="272" width="1" height="1" fill="#b4b4cc"/><rect x="290" y="272" width="1" height="1" fill="#b4b4cc"/><rect x="306" y="272" width="1" height="1" fill="#b4b4cc"/><rect x="323" y="272" width="1" height="1" fill="#b4b4cc"/><rect x="339" y="272" width="1" height="1" fill="#b4b4cc"/><rect x="356" y="272" width="1" height="1" fill="#b4b4cc"/><rect x="373" y="272" width="1" height="1" fill="#b4b4cc"/><rect x="389" y="272" width="1" height="1" fill="#b4b4cc"/><rect x="406" y="272" width="1" height="1" fill="#b4b4cc"/><rect x="422" y="272" width="1" height="1" fill="#b4b4cc"/><rect x="439" y="272" width="1" height="1" fill="#b4b4cc"/><rect x="107" y="289" width="1" height="1" fill="#b4b4cc"/><rect x="124" y="289" width="1" height="1" fill="#b4b4cc"/><rect x="140" y="289" width="1" height="1" fill="#b4b4cc"/><rect x="157" y="289" width="1" height="1" fill="#b4b4cc"/><rect x="173" y="289" width="1" height="1" fill="#b4b4cc"/><rect x="190" y="289" width="1" height="1" fill="#b4b4cc"/><rect x="207" y="289" width="1" height="1" fill="#b4b4cc"/><rect x="223" y="289" width="1" height="1" fill="#b4b4cc"/><rect x="240" y="289" width="1" height="1" fill="#b4b4cc"/><rect x="256" y="289" width="1" height="1" fill="#b4b4cc"/><rect x="273" y="289" width="1" height="1" fill="#b4b4cc"/><rect x="290" y="289" width="1" height="1" fill="#b4b4cc"/><rect x="306" y="289" width="1" height="1" fill="#b4b4cc"/><rect x="323" y="289" width="1" height="1" fill="#b4b4cc"/><rect x="339" y="289" width="1" height="1" fill="#b4b4cc"/><rect x="356" y="289" width="1" height="1" fill="#b4b4cc"/><rect x="373" y="289" width="1" height="1" fill="#b4b4cc"/><rect x="389" y="289" width="1" height="1" fill="#b4b4cc"/><rect x="406" y="289" width="1" height="1" fill="#b4b4cc"/><rect x="422" y="289" width="1" height="1" fill="#b4b4cc"/><rect x="439" y="289" width="1" height="1" fill="#b4b4cc"/><rect x="107" y="305" width="1" height="1" fill="#b4b4cc"/><rect x="124" y="305" width="1" height="1" fill="#b4b4cc"/><rect x="140" y="305" width="1" height="1" fill="#b4b4cc"/><rect x="157" y="305" width="1" height="1" fill="#b4b4cc"/><rect x="173" y="305" width="1" height="1" fill="#b4b4cc"/><rect x="190" y="305" width="1" height="1" fill="#b4b4cc"/><rect x="207" y="305" width="1" height="1" fill="#b4b4cc"/><rect x="223" y="305" width="1" height="1" fill="#b4b4cc"/><rect x="240" y="305" width="1" height="1" fill="#b4b4cc"/><rect x="256" y="305" width="1" height="1" fill="#b4b4cc"/><rect x="273" y="305" width="1" height="1" fill="#b4b4cc"/><rect x="290" y="305" width="1" height="1" fill="#b4b4cc"/><rect x="306" y="305" width="1" height="1" fill="#b4b4cc"/><rect x="323" y="305" width="1" height="1" fill="#b4b4cc"/><rect x="339" y="305" width="1" height="1" fill="#b4b4cc"/><rect x="356" y="305" width="1" height="1" fill="#b4b4cc"/><rect x="373" y="305" width="1" height="1" fill="#b4b4cc"/><rect x="389" y="305" width="1" height="1" fill="#b4b4cc"/><rect x="406" y="305" width="1" height="1" fill="#b4b4cc"/><rect x="422" y="305" width="1" height="1" fill="#b4b4cc"/><rect x="439" y="305" width="1" height="1" fill="#b4b4cc"/><rect x="107" y="322" width="1" height="1" fill="#b4b4cc"/><rect x="124" y="322" width="1" height="1" fill="#b4b4cc"/><rect x="140" y="322" width="1" height="1" fill="#b4b4cc"/><rect x="157" y="322" width="1" height="1" fill="#b4b4cc"/><rect x="173" y="322" width="1" height="1" fill="#b4b4cc"/><rect x="190" y="322" width="1" height="1" fill="#b4b4cc"/><rect x="207" y="322" width="1" height="1" fill="#b4b4cc"/><rect x="223" y="322" width="1" height="1" fill="#b4b4cc"/><rect x="240" y="322" width="1" height="1" fill="#b4b4cc"/><rect x="256" y="322" width="1" height="1" fill="#b4b4cc"/><rect x="273" y="322" width="1" height="1" fill="#b4b4cc"/><rect x="290" y="322" width="1" height="1" fill="#b4b4cc"/><rect x="306" y="322" width="1" height="1" fill="#b4b4cc"/><rect x="323" y="322" width="1" height="1" fill="#b4b4cc"/><rect x="339" y="322" width="1" height="1" fill="#b4b4cc"/><rect x="356" y="322" width="1" height="1" fill="#b4b4cc"/><rect x="373" y="322" width="1" height="1" fill="#b4b4cc"/><rect x="389" y="322" width="1" height="1" fill="#b4b4cc"/><rect x="406" y="322" width="1" height="1" fill="#b4b4cc"/><rect x="422" y="322" width="1" height="1" fill="#b4b4cc"/><rect x="439" y="322" width="1" height="1" fill="#b4b4cc"/><rect x="107" y="339" width="1" height="1" fill="#b4b4cc"/><rect x="124" y="339" width="1" height="1" fill="#b4b4cc"/><rect x="140" y="339" width="1" height="1" fill="#b4b4cc"/><rect x="157" y="339" width="1" height="1" fill="#b4b4cc"/><rect x="173" y="339" width="1" height="1" fill="#b4b4cc"/><rect x="190" y="339" width="1" height="1" fill="#b4b4cc"/><rect x="207" y="339" width="1" height="1" fill="#b4b4cc"/><rect x="223" y="339" width="1" height="1" fill="#b4b4cc"/><rect x="240" y="339" width="1" height="1" fill="#b4b4cc"/><rect x="256" y="339" width="1" height="1" fill="#b4b4cc"/><rect x="273" y="339" width="1" height="1" fill="#b4b4cc"/><rect x="290" y="339" width="1" height="1" fill="#b4b4cc"/><rect x="306" y="339" width="1" height="1" fill="#b4b4cc"/><rect x="323" y="339" width="1" height="1" fill="#b4b4cc"/><rect x="339" y="339" width="1" height="1" fill="#b4b4cc"/><rect x="356" y="339" width="1" height="1" fill="#b4b4cc"/><rect x="373" y="339" width="1" height="1" fill="#b4b4cc"/><rect x="389" y="339" width="1" height="1" fill="#b4b4cc"/><rect x="406" y="339" width="1" height="1" fill="#b4b4cc"/><rect x="422" y="339" width="1" height="1" fill="#b4b4cc"/><rect x="439" y="339" width="1" height="1" fill="#b4b4cc"/><rect x="107" y="355" width="1" height="1" fill="#b4b4cc"/><rect x="124" y="355" width="1" height="1" fill="#b4b4cc"/><rect x="140" y="355" width="1" height="1" fill="#b4b4cc"/><rect x="157" y="355" width="1" height="1" fill="#b4b4cc"/><rect x="173" y="355" width="1" height="1" fill="#b4b4cc"/><rect x="190" y="355" width="1" height="1" fill="#b4b4cc"/><rect x="207" y="355" width="1" height="1" fill="#b4b4cc"/><rect x="223" y="355" width="1" height="1" fill="#b4b4cc"/><rect x="240" y="355" width="1" height="1" fill="#b4b4cc"/><rect x="256" y="355" width="1" height="1" fill="#b4b4cc"/><rect x="273" y="355" width="1" height="1" fill="#b4b4cc"/><rect x="290" y="355" width="1" height="1" fill="#b4b4cc"/><rect x="306" y="355" width="1" height="1" fill="#b4b4cc"/><rect x="323" y="355" width="1" height="1" fill="#b4b4cc"/><rect x="339" y="355" width="1" height="1" fill="#b4b4cc"/><rect x="356" y="355" width="1" height="1" fill="#b4b4cc"/><rect x="373" y="355" width="1" height="1" fill="#b4b4cc"/><rect x="389" y="355" width="1" height="1" fill="#b4b4cc"/><rect x="406" y="355" width="1" height="1" fill="#b4b4cc"/><rect x="422" y="355" width="1" height="1" fill="#b4b4cc"/><rect x="439" y="355" width="1" height="1" fill="#b4b4cc"/><rect x="107" y="372" width="1" height="1" fill="#b4b4cc"/><rect x="124" y="372" width="1" height="1" fill="#b4b4cc"/><rect x="140" y="372" width="1" height="1" fill="#b4b4cc"/><rect x="157" y="372" width="1" height="1" fill="#b4b4cc"/><rect x="173" y="372" width="1" height="1" fill="#b4b4cc"/><rect x="190" y="372" width="1" height="1" fill="#b4b4cc"/><rect x="207" y="372" width="1" height="1" fill="#b4b4cc"/><rect x="223" y="372" width="1" height="1" fill="#b4b4cc"/><rect x="240" y="372" width="1" height="1" fill="#b4b4cc"/><rect x="256" y="372" width="1" height="1" fill="#b4b4cc"/><rect x="273" y="372" width="1" height="1" fill="#b4b4cc"/><rect x="290" y="372" width="1" height="1" fill="#b4b4cc"/><rect x="306" y="372" width="1" height="1" fill="#b4b4cc"/><rect x="323" y="372" width="1" height="1" fill="#b4b4cc"/><rect x="339" y="372" width="1" height="1" fill="#b4b4cc"/><rect x="356" y="372" width="1" height="1" fill="#b4b4cc"/><rect x="373" y="372" width="1" height="1" fill="#b4b4cc"/><rect x="389" y="372" width="1" height="1" fill="#b4b4cc"/><rect x="406" y="372" width="1" height="1" fill="#b4b4cc"/><rect x="422" y="372" width="1" height="1" fill="#b4b4cc"/><rect x="439" y="372" width="1" height="1" fill="#b4b4cc"/><rect x="107" y="388" width="1" height="1" fill="#b4b4cc"/><rect x="124" y="388" width="1" height="1" fill="#b4b4cc"/><rect x="140" y="388" width="1" height="1" fill="#b4b4cc"/><rect x="157" y="388" width="1" height="1" fill="#b4b4cc"/><rect x="173" y="388" width="1" height="1" fill="#b4b4cc"/><rect x="190" y="388" width="1" height="1" fill="#b4b4cc"/><rect x="207" y="388" width="1" height="1" fill="#b4b4cc"/><rect x="223" y="388" width="1" height="1" fill="#b4b4cc"/><rect x="240" y="388" width="1" height="1" fill="#b4b4cc"/><rect x="256" y="388" width="1" height="1" fill="#b4b4cc"/><rect x="273" y="388" width="1" height="1" fill="#b4b4cc"/><rect x="290" y="388" width="1" height="1" fill="#b4b4cc"/><rect x="306" y="388" width="1" height="1" fill="#b4b4cc"/><rect x="323" y="388" width="1" height="1" fill="#b4b4cc"/><rect x="339" y="388" width="1" height="1" fill="#b4b4cc"/><rect x="356" y="388" width="1" height="1" fill="#b4b4cc"/><rect x="373" y="388" width="1" height="1" fill="#b4b4cc"/><rect x="389" y="388" width="1" height="1" fill="#b4b4cc"/><rect x="406" y="388" width="1" height="1" fill="#b4b4cc"/><rect x="422" y="388" width="1" height="1" fill="#b4b4cc"/><rect x="439" y="388" width="1" height="1" fill="#b4b4cc"/><rect x="107" y="405" width="1" height="1" fill="#b4b4cc"/><rect x="124" y="405" width="1" height="1" fill="#b4b4cc"/><rect x="140" y="405" width="1" height="1" fill="#b4b4cc"/><rect x="157" y="405" width="1" height="1" fill="#b4b4cc"/><rect x="173" y="405" width="1" height="1" fill="#b4b4cc"/><rect x="190" y="405" width="1" height="1" fill="#b4b4cc"/><rect x="207" y="405" width="1" height="1" fill="#b4b4cc"/><rect x="223" y="405" width="1" height="1" fill="#b4b4cc"/><rect x="240" y="405" width="1" height="1" fill="#b4b4cc"/><rect x="256" y="405" width="1" height="1" fill="#b4b4cc"/><rect x="273" y="405" width="1" height="1" fill="#b4b4cc"/><rect x="290" y="405" width="1" height="1" fill="#b4b4cc"/><rect x="306" y="405" width="1" height="1" fill="#b4b4cc"/><rect x="323" y="405" width="1" height="1" fill="#b4b4cc"/><rect x="339" y="405" width="1" height="1" fill="#b4b4cc"/><rect x="356" y="405" width="1" height="1" fill="#b4b4cc"/><rect x="373" y="405" width="1" height="1" fill="#b4b4cc"/><rect x="389" y="405" width="1" height="1" fill="#b4b4cc"/><rect x="406" y="405" width="1" height="1" fill="#b4b4cc"/><rect x="422" y="405" width="1" height="1" fill="#b4b4cc"/><rect x="439" y="405" width="1" height="1" fill="#b4b4cc"/><rect x="107" y="422" width="1" height="1" fill="#b4b4cc"/><rect x="124" y="422" width="1" height="1" fill="#b4b4cc"/><rect x="140" y="422" width="1" height="1" fill="#b4b4cc"/><rect x="157" y="422" width="1" height="1" fill="#b4b4cc"/><rect x="173" y="422" width="1" height="1" fill="#b4b4cc"/><rect x="190" y="422" width="1" height="1" fill="#b4b4cc"/><rect x="207" y="422" width="1" height="1" fill="#b4b4cc"/><rect x="223" y="422" width="1" height="1" fill="#b4b4cc"/><rect x="240" y="422" width="1" height="1" fill="#b4b4cc"/><rect x="256" y="422" width="1" height="1" fill="#b4b4cc"/><rect x="273" y="422" width="1" height="1" fill="#b4b4cc"/><rect x="290" y="422" width="1" height="1" fill="#b4b4cc"/><rect x="306" y="422" width="1" height="1" fill="#b4b4cc"/><rect x="323" y="422" width="1" height="1" fill="#b4b4cc"/><rect x="339" y="422" width="1" height="1" fill="#b4b4cc"/><rect x="356" y="422" width="1" height="1" fill="#b4b4cc"/><rect x="373" y="422" width="1" height="1" fill="#b4b4cc"/><rect x="389" y="422" width="1" height="1" fill="#b4b4cc"/><rect x="406" y="422" width="1" height="1" fill="#b4b4cc"/><rect x="422" y="422" width="1" height="1" fill="#b4b4cc"/><rect x="439" y="422" width="1" height="1" fill="#b4b4cc"/><rect x="107" y="438" width="1" height="1" fill="#b4b4cc"/><rect x="124" y="438" width="1" height="1" fill="#b4b4cc"/><rect x="140" y="438" width="1" height="1" fill="#b4b4cc"/><rect x="157" y="438" width="1" height="1" fill="#b4b4cc"/><rect x="173" y="438" width="1" height="1" fill="#b4b4cc"/><rect x="190" y="438" width="1" height="1" fill="#b4b4cc"/><rect x="207" y="438" width="1" height="1" fill="#b4b4cc"/><rect x="223" y="438" width="1" height="1" fill="#b4b4cc"/><rect x="240" y="438" width="1" height="1" fill="#b4b4cc"/><rect x="256" y="438" width="1" height="1" fill="#b4b4cc"/><rect x="273" y="438" width="1" height="1" fill="#b4b4cc"/><rect x="290" y="438" width="1" height="1" fill="#b4b4cc"/><rect x="306" y="438" width="1" height="1" fill="#b4b4cc"/><rect x="323" y="438" width="1" height="1" fill="#b4b4cc"/><rect x="339" y="438" width="1" height="1" fill="#b4b4cc"/><rect x="356" y="438" width="1" height="1" fill="#b4b4cc"/><rect x="373" y="438" width="1" height="1" fill="#b4b4cc"/><rect x="389" y="438" width="1" height="1" fill="#b4b4cc"/><rect x="406" y="438" width="1" height="1" fill="#b4b4cc"/><rect x="422" y="438" width="1" height="1" fill="#b4b4cc"/><rect x="439" y="438" width="1" height="1" fill="#b4b4cc"/><rect x="107" y="455" width="1" height="1" fill="#b4b4cc"/><rect x="124" y="455" width="1" height="1" fill="#b4b4cc"/><rect x="140" y="455" width="1" height="1" fill="#b4b4cc"/><rect x="157" y="455" width="1" height="1" fill="#b4b4cc"/><rect x="173" y="455" width="1" height="1" fill="#b4b4cc"/><rect x="190" y="455" width="1" height="1" fill="#b4b4cc"/><rect x="207" y="455" width="1" height="1" fill="#b4b4cc"/><rect x="223" y="455" width="1" height="1" fill="#b4b4cc"/><rect x="240" y="455" width="1" height="1" fill="#b4b4cc"/><rect x="256" y="455" width="1" height="1" fill="#b4b4cc"/><rect x="273" y="455" width="1" height="1" fill="#b4b4cc"/><rect x="290" y="455" width="1" height="1" fill="#b4b4cc"/><rect x="306" y="455" width="1" height="1" fill="#b4b4cc"/><rect x="323" y="455" width="1" height="1" fill="#b4b4cc"/><rect x="339" y="455" width="1" height="1" fill="#b4b4cc"/><rect x="356" y="455" width="1" height="1" fill="#b4b4cc"/><rect x="373" y="455" width="1" height="1" fill="#b4b4cc"/><rect x="389" y="455" width="1" height="1" fill="#b4b4cc"/><rect x="406" y="455" width="1" height="1" fill="#b4b4cc"/><rect x="422" y="455" width="1" height="1" fill="#b4b4cc"/><rect x="439" y="455" width="1" height="1" fill="#b4b4cc"/><rect x="107" y="472" width="1" height="1" fill="#b4b4cc"/><rect x="124" y="472" width="1" height="1" fill="#b4b4cc"/><rect x="140" y="472" width="1" height="1" fill="#b4b4cc"/><rect x="157" y="472" width="1" height="1" fill="#b4b4cc"/><rect x="173" y="472" width="1" height="1" fill="#b4b4cc"/><rect x="190" y="472" width="1" height="1" fill="#b4b4cc"/><rect x="207" y="472" width="1" height="1" fill="#b4b4cc"/><rect x="223" y="472" width="1" height="1" fill="#b4b4cc"/><rect x="240" y="472" width="1" height="1" fill="#b4b4cc"/><rect x="256" y="472" width="1" height="1" fill="#b4b4cc"/><rect x="273" y="472" width="1" height="1" fill="#b4b4cc"/><rect x="290" y="472" width="1" height="1" fill="#b4b4cc"/><rect x="306" y="472" width="1" height="1" fill="#b4b4cc"/><rect x="323" y="472" width="1" height="1" fill="#b4b4cc"/><rect x="339" y="472" width="1" height="1" fill="#b4b4cc"/><rect x="356" y="472" width="1" height="1" fill="#b4b4cc"/><rect x="373" y="472" width="1" height="1" fill="#b4b4cc"/><rect x="389" y="472" width="1" height="1" fill="#b4b4cc"/><rect x="406" y="472" width="1" height="1" fill="#b4b4cc"/><rect x="422" y="472" width="1" height="1" fill="#b4b4cc"/><rect x="439" y="472" width="1" height="1" fill="#b4b4cc"/><rect x="107" y="488" width="1" height="1" fill="#b4b4cc"/><rect x="124" y="488" width="1" height="1" fill="#b4b4cc"/><rect x="140" y="488" width="1" height="1" fill="#b4b4cc"/><rect x="157" y="488" width="1" height="1" fill="#b4b4cc"/><rect x="173" y="488" width="1" height="1" fill="#b4b4cc"/><rect x="190" y="488" width="1" height="1" fill="#b4b4cc"/><rect x="207" y="488" width="1" height="1" fill="#b4b4cc"/><rect x="223" y="488" width="1" height="1" fill="#b4b4cc"/><rect x="240" y="488" width="1" height="1" fill="#b4b4cc"/><rect x="256" y="488" width="1" height="1" fill="#b4b4cc"/><rect x="273" y="488" width="1" height="1" fill="#b4b4cc"/><rect x="290" y="488" width="1" height="1" fill="#b4b4cc"/><rect x="306" y="488" width="1" height="1" fill="#b4b4cc"/><rect x="323" y="488" width="1" height="1" fill="#b4b4cc"/><rect x="339" y="488" width="1" height="1" fill="#b4b4cc"/><rect x="356" y="488" width="1" height="1" fill="#b4b4cc"/><rect x="373" y="488" width="1" height="1" fill="#b4b4cc"/><rect x="389" y="488" width="1" height="1" fill="#b4b4cc"/><rect x="406" y="488" width="1" height="1" fill="#b4b4cc"/><rect x="422" y="488" width="1" height="1" fill="#b4b4cc"/><rect x="439" y="488" width="1" height="1" fill="#b4b4cc"/><rect x="107" y="505" width="1" height="1" fill="#b4b4cc"/><rect x="124" y="505" width="1" height="1" fill="#b4b4cc"/><rect x="140" y="505" width="1" height="1" fill="#b4b4cc"/><rect x="157" y="505" width="1" height="1" fill="#b4b4cc"/><rect x="173" y="505" width="1" height="1" fill="#b4b4cc"/><rect x="190" y="505" width="1" height="1" fill="#b4b4cc"/><rect x="207" y="505" width="1" height="1" fill="#b4b4cc"/><rect x="223" y="505" width="1" height="1" fill="#b4b4cc"/><rect x="240" y="505" width="1" height="1" fill="#b4b4cc"/><rect x="256" y="505" width="1" height="1" fill="#b4b4cc"/><rect x="273" y="505" width="1" height="1" fill="#b4b4cc"/><rect x="290" y="505" width="1" height="1" fill="#b4b4cc"/><rect x="306" y="505" width="1" height="1" fill="#b4b4cc"/><rect x="323" y="505" width="1" height="1" fill="#b4b4cc"/><rect x="339" y="505" width="1" height="1" fill="#b4b4cc"/><rect x="356" y="505" width="1" height="1" fill="#b4b4cc"/><rect x="373" y="505" width="1" height="1" fill="#b4b4cc"/><rect x="389" y="505" width="1" height="1" fill="#b4b4cc"/><rect x="406" y="505" width="1" height="1" fill="#b4b4cc"/><rect x="422" y="505" width="1" height="1" fill="#b4b4cc"/><rect x="439" y="505" width="1" height="1" fill="#b4b4cc"/><rect x="107" y="521" width="1" height="1" fill="#b4b4cc"/><rect x="124" y="521" width="1" height="1" fill="#b4b4cc"/><rect x="140" y="521" width="1" height="1" fill="#b4b4cc"/><rect x="157" y="521" width="1" height="1" fill="#b4b4cc"/><rect x="173" y="521" width="1" height="1" fill="#b4b4cc"/><rect x="190" y="521" width="1" height="1" fill="#b4b4cc"/><rect x="207" y="521" width="1" height="1" fill="#b4b4cc"/><rect x="223" y="521" width="1" height="1" fill="#b4b4cc"/><rect x="240" y="521" width="1" height="1" fill="#b4b4cc"/><rect x="256" y="521" width="1" height="1" fill="#b4b4cc"/><rect x="273" y="521" width="1" height="1" fill="#b4b4cc"/><rect x="290" y="521" width="1" height="1" fill="#b4b4cc"/><rect x="306" y="521" width="1" height="1" fill="#b4b4cc"/><rect x="323" y="521" width="1" height="1" fill="#b4b4cc"/><rect x="339" y="521" width="1" height="1" fill="#b4b4cc"/><rect x="356" y="521" width="1" height="1" fill="#b4b4cc"/><rect x="373" y="521" width="1" height="1" fill="#b4b4cc"/><rect x="389" y="521" width="1" height="1" fill="#b4b4cc"/><rect x="406" y="521" width="1" height="1" fill="#b4b4cc"/><rect x="422" y="521" width="1" height="1" fill="#b4b4cc"/><rect x="439" y="521" width="1" height="1" fill="#b4b4cc"/><rect x="107" y="538" width="1" height="1" fill="#b4b4cc"/><rect x="124" y="538" width="1" height="1" fill="#b4b4cc"/><rect x="140" y="538" width="1" height="1" fill="#b4b4cc"/><rect x="157" y="538" width="1" height="1" fill="#b4b4cc"/><rect x="173" y="538" width="1" height="1" fill="#b4b4cc"/><rect x="190" y="538" width="1" height="1" fill="#b4b4cc"/><rect x="207" y="538" width="1" height="1" fill="#b4b4cc"/><rect x="223" y="538" width="1" height="1" fill="#b4b4cc"/><rect x="240" y="538" width="1" height="1" fill="#b4b4cc"/><rect x="256" y="538" width="1" height="1" fill="#b4b4cc"/><rect x="273" y="538" width="1" height="1" fill="#b4b4cc"/><rect x="290" y="538" width="1" height="1" fill="#b4b4cc"/><rect x="306" y="538" width="1" height="1" fill="#b4b4cc"/><rect x="323" y="538" width="1" height="1" fill="#b4b4cc"/><rect x="339" y="538" width="1" height="1" fill="#b4b4cc"/><rect x="356" y="538" width="1" height="1" fill="#b4b4cc"/><rect x="373" y="538" width="1" height="1" fill="#b4b4cc"/><rect x="389" y="538" width="1" height="1" fill="#b4b4cc"/><rect x="406" y="538" width="1" height="1" fill="#b4b4cc"/><rect x="422" y="538" width="1" height="1" fill="#b4b4cc"/><rect x="439" y="538" width="1" height="1" fill="#b4b4cc"/><rect x="107" y="555" width="1" height="1" fill="#b4b4cc"/><rect x="124" y="555" width="1" height="1" fill="#b4b4cc"/><rect x="140" y="555" width="1" height="1" fill="#b4b4cc"/><rect x="157" y="555" width="1" height="1" fill="#b4b4cc"/><rect x="173" y="555" width="1" height="1" fill="#b4b4cc"/><rect x="190" y="555" width="1" height="1" fill="#b4b4cc"/><rect x="207" y="555" width="1" height="1" fill="#b4b4cc"/><rect x="223" y="555" width="1" height="1" fill="#b4b4cc"/><rect x="240" y="555" width="1" height="1" fill="#b4b4cc"/><rect x="256" y="555" width="1" height="1" fill="#b4b4cc"/><rect x="273" y="555" width="1" height="1" fill="#b4b4cc"/><rect x="290" y="555" width="1" height="1" fill="#b4b4cc"/><rect x="306" y="555" width="1" height="1" fill="#b4b4cc"/><rect x="323" y="555" width="1" height="1" fill="#b4b4cc"/><rect x="339" y="555" width="1" height="1" fill="#b4b4cc"/><rect x="356" y="555" width="1" height="1" fill="#b4b4cc"/><rect x="373" y="555" width="1" height="1" fill="#b4b4cc"/><rect x="389" y="555" width="1" height="1" fill="#b4b4cc"/><rect x="406" y="555" width="1" height="1" fill="#b4b4cc"/><rect x="422" y="555" width="1" height="1" fill="#b4b4cc"/><rect x="439" y="555" width="1" height="1" fill="#b4b4cc"/><rect x="107" y="571" width="1" height="1" fill="#b4b4cc"/><rect x="124" y="571" width="1" height="1" fill="#b4b4cc"/><rect x="140" y="571" width="1" height="1" fill="#b4b4cc"/><rect x="157" y="571" width="1" height="1" fill="#b4b4cc"/><rect x="173" y="571" width="1" height="1" fill="#b4b4cc"/><rect x="190" y="571" width="1" height="1" fill="#b4b4cc"/><rect x="207" y="571" width="1" height="1" fill="#b4b4cc"/><rect x="223" y="571" width="1" height="1" fill="#b4b4cc"/><rect x="240" y="571" width="1" height="1" fill="#b4b4cc"/><rect x="256" y="571" width="1" height="1" fill="#b4b4cc"/><rect x="273" y="571" width="1" height="1" fill="#b4b4cc"/><rect x="290" y="571" width="1" height="1" fill="#b4b4cc"/><rect x="306" y="571" width="1" height="1" fill="#b4b4cc"/><rect x="323" y="571" width="1" height="1" fill="#b4b4cc"/><rect x="339" y="571" width="1" height="1" fill="#b4b4cc"/><rect x="356" y="571" width="1" height="1" fill="#b4b4cc"/><rect x="373" y="571" width="1" height="1" fill="#b4b4cc"/><rect x="389" y="571" width="1" height="1" fill="#b4b4cc"/><rect x="406" y="571" width="1" height="1" fill="#b4b4cc"/><rect x="422" y="571" width="1" height="1" fill="#b4b4cc"/><rect x="439" y="571" width="1" height="1" fill="#b4b4cc"/><rect x="107" y="588" width="1" height="1" fill="#b4b4cc"/><rect x="124" y="588" width="1" height="1" fill="#b4b4cc"/><rect x="140" y="588" width="1" height="1" fill="#b4b4cc"/><rect x="157" y="588" width="1" height="1" fill="#b4b4cc"/><rect x="173" y="588" width="1" height="1" fill="#b4b4cc"/><rect x="190" y="588" width="1" height="1" fill="#b4b4cc"/><rect x="207" y="588" width="1" height="1" fill="#b4b4cc"/><rect x="223" y="588" width="1" height="1" fill="#b4b4cc"/><rect x="240" y="588" width="1" height="1" fill="#b4b4cc"/><rect x="256" y="588" width="1" height="1" fill="#b4b4cc"/><rect x="273" y="588" width="1" height="1" fill="#b4b4cc"/><rect x="290" y="588" width="1" height="1" fill="#b4b4cc"/><rect x="306" y="588" width="1" height="1" fill="#b4b4cc"/><rect x="323" y="588" width="1" height="1" fill="#b4b4cc"/><rect x="339" y="588" width="1" height="1" fill="#b4b4cc"/><rect x="356" y="588" width="1" height="1" fill="#b4b4cc"/><rect x="373" y="588" width="1" height="1" fill="#b4b4cc"/><rect x="389" y="588" width="1" height="1" fill="#b4b4cc"/><rect x="406" y="588" width="1" height="1" fill="#b4b4cc"/><rect x="422" y="588" width="1" height="1" fill="#b4b4cc"/><rect x="439" y="588" width="1" height="1" fill="#b4b4cc"/><rect x="107" y="605" width="1" height="1" fill="#b4b4cc"/><rect x="124" y="605" width="1" height="1" fill="#b4b4cc"/><rect x="140" y="605" width="1" height="1" fill="#b4b4cc"/><rect x="157" y="605" width="1" height="1" fill="#b4b4cc"/><rect x="173" y="605" width="1" height="1" fill="#b4b4cc"/><rect x="190" y="605" width="1" height="1" fill="#b4b4cc"/><rect x="207" y="605" width="1" height="1" fill="#b4b4cc"/><rect x="223" y="605" width="1" height="1" fill="#b4b4cc"/><rect x="240" y="605" width="1" height="1" fill="#b4b4cc"/><rect x="256" y="605" width="1" height="1" fill="#b4b4cc"/><rect x="273" y="605" width="1" height="1" fill="#b4b4cc"/><rect x="290" y="605" width="1" height="1" fill="#b4b4cc"/><rect x="306" y="605" width="1" height="1" fill="#b4b4cc"/><rect x="323" y="605" width="1" height="1" fill="#b4b4cc"/><rect x="339" y="605" width="1" height="1" fill="#b4b4cc"/><rect x="356" y="605" width="1" height="1" fill="#b4b4cc"/><rect x="373" y="605" width="1" height="1" fill="#b4b4cc"/><rect x="389" y="605" width="1" height="1" fill="#b4b4cc"/><rect x="406" y="605" width="1" height="1" fill="#b4b4cc"/><rect x="422" y="605" width="1" height="1" fill="#b4b4cc"/><rect x="439" y="605" width="1" height="1" fill="#b4b4cc"/><rect x="107" y="621" width="1" height="1" fill="#b4b4cc"/><rect x="124" y="621" width="1" height="1" fill="#b4b4cc"/><rect x="140" y="621" width="1" height="1" fill="#b4b4cc"/><rect x="157" y="621" width="1" height="1" fill="#b4b4cc"/><rect x="173" y="621" width="1" height="1" fill="#b4b4cc"/><rect x="190" y="621" width="1" height="1" fill="#b4b4cc"/><rect x="207" y="621" width="1" height="1" fill="#b4b4cc"/><rect x="223" y="621" width="1" height="1" fill="#b4b4cc"/><rect x="240" y="621" width="1" height="1" fill="#b4b4cc"/><rect x="256" y="621" width="1" height="1" fill="#b4b4cc"/><rect x="273" y="621" width="1" height="1" fill="#b4b4cc"/><rect x="290" y="621" width="1" height="1" fill="#b4b4cc"/><rect x="306" y="621" width="1" height="1" fill="#b4b4cc"/><rect x="323" y="621" width="1" height="1" fill="#b4b4cc"/><rect x="339" y="621" width="1" height="1" fill="#b4b4cc"/><rect x="356" y="621" width="1" height="1" fill="#b4b4cc"/><rect x="373" y="621" width="1" height="1" fill="#b4b4cc"/><rect x="389" y="621" width="1" height="1" fill="#b4b4cc"/><rect x="406" y="621" width="1" height="1" fill="#b4b4cc"/><rect x="422" y="621" width="1" height="1" fill="#b4b4cc"/><rect x="439" y="621" width="1" height="1" fill="#b4b4cc"/><rect x="107" y="638" width="1" height="1" fill="#ffffff"/><rect x="124" y="638" width="1" height="1" fill="#b4b4cc"/><rect x="140" y="638" width="1" height="1" fill="#b4b4cc"/><rect x="157" y="638" width="1" height="1" fill="#b4b4cc"/><rect x="173" y="638" width="1" height="1" fill="#b4b4cc"/><rect x="190" y="638" width="1" height="1" fill="#b4b4cc"/><rect x="207" y="638" width="1" height="1" fill="#b4b4cc"/><rect x="223" y="638" width="1" height="1" fill="#b4b4cc"/><rect x="240" y="638" width="1" height="1" fill="#b4b4cc"/><rect x="256" y="638" width="1" height="1" fill="#b4b4cc"/><rect x="273" y="638" width="1" height="1" fill="#b4b4cc"/><rect x="290" y="638" width="1" height="1" fill="#b4b4cc"/><rect x="306" y="638" width="1" height="1" fill="#b4b4cc"/><rect x="323" y="638" width="1" height="1" fill="#b4b4cc"/><rect x="339" y="638" width="1" height="1" fill="#b4b4cc"/><rect x="356" y="638" width="1" height="1" fill="#b4b4cc"/><rect x="373" y="638" width="1" height="1" fill="#ffffff"/><rect x="389" y="638" width="1" height="1" fill="#b4b4cc"/><rect x="406" y="638" width="1" height="1" fill="#b4b4cc"/><rect x="422" y="638" width="1" height="1" fill="#b4b4cc"/><rect x="439" y="638" width="1" height="1" fill="#b4b4cc"/><rect x="107" y="654" width="1" height="1" fill="#b4b4cc"/><rect x="124" y="654" width="1" height="1" fill="#b4b4cc"/><rect x="140" y="654" width="1" height="1" fill="#b4b4cc"/><rect x="157" y="654" width="1" height="1" fill="#b4b4cc"/><rect x="173" y="654" width="1" height="1" fill="#b4b4cc"/><rect x="190" y="654" width="1" height="1" fill="#b4b4cc"/><rect x="207" y="654" width="1" height="1" fill="#b4b4cc"/><rect x="223" y="654" width="1" height="1" fill="#b4b4cc"/><rect x="240" y="654" width="1" height="1" fill="#b4b4cc"/><rect x="256" y="654" width="1" height="1" fill="#b4b4cc"/><rect x="273" y="654" width="1" height="1" fill="#b4b4cc"/><rect x="290" y="654" width="1" height="1" fill="#b4b4cc"/><rect x="306" y="654" width="1" height="1" fill="#b4b4cc"/><rect x="323" y="654" width="1" height="1" fill="#b4b4cc"/><rect x="339" y="654" width="1" height="1" fill="#b4b4cc"/><rect x="356" y="654" width="1" height="1" fill="#b4b4cc"/><rect x="373" y="654" width="1" height="1" fill="#b4b4cc"/><rect x="389" y="654" width="1" height="1" fill="#b4b4cc"/><rect x="406" y="654" width="1" height="1" fill="#b4b4cc"/><rect x="422" y="654" width="1" height="1" fill="#b4b4cc"/><rect x="439" y="654" width="1" height="1" fill="#b4b4cc"/><rect x="107" y="671" width="1" height="1" fill="#b4b4cc"/><rect x="124" y="671" width="1" height="1" fill="#b4b4cc"/><rect x="140" y="671" width="1" height="1" fill="#b4b4cc"/><rect x="157" y="671" width="1" height="1" fill="#b4b4cc"/><rect x="173" y="671" width="1" height="1" fill="#b4b4cc"/><rect x="190" y="671" width="1" height="1" fill="#b4b4cc"/><rect x="207" y="671" width="1" height="1" fill="#b4b4cc"/><rect x="223" y="671" width="1" height="1" fill="#b4b4cc"/><rect x="240" y="671" width="1" height="1" fill="#b4b4cc"/><rect x="256" y="671" width="1" height="1" fill="#b4b4cc"/><rect x="273" y="671" width="1" height="1" fill="#b4b4cc"/><rect x="290" y="671" width="1" height="1" fill="#b4b4cc"/><rect x="306" y="671" width="1" height="1" fill="#b4b4cc"/><rect x="323" y="671" width="1" height="1" fill="#b4b4cc"/><rect x="339" y="671" width="1" height="1" fill="#b4b4cc"/><rect x="356" y="671" width="1" height="1" fill="#b4b4cc"/><rect x="373" y="671" width="1" height="1" fill="#b4b4cc"/><rect x="389" y="671" width="1" height="1" fill="#b4b4cc"/><rect x="406" y="671" width="1" height="1" fill="#b4b4cc"/><rect x="422" y="671" width="1" height="1" fill="#b4b4cc"/><rect x="439" y="671" width="1" height="1" fill="#b4b4cc"/><text x="107" y="311" font-family="Liberation Sans" font-size="11" fill="#f4f400" stroke="#f4f400" stroke-width="0.2" textLength="40" lengthAdjust="spacingAndGlyphs">IND_STD</text><text x="166" y="311" font-family="Liberation Sans" font-size="11" fill="#1ec878" stroke="#1ec878" stroke-width="0.2" textLength="11" lengthAdjust="spacingAndGlyphs">L6</text><line x1="157.5" y1="318" x2="157.5" y2="325" stroke="#1ec878" stroke-width="1"/><path d="M157.5,325 C164.5,325.0 164.5,331.75 157.5,331.75 C164.5,331.75 164.5,338.5 157.5,338.5 C164.5,338.5 164.5,345.25 157.5,345.25 C164.5,345.25 164.5,352.0 157.5,352.0" fill="none" stroke="#1ec878" stroke-width="1"/><line x1="157.5" y1="352" x2="157.5" y2="360" stroke="#1ec878" stroke-width="1"/><path d="M164.5,318.5L167.5,321.5L164.5,324.5L161.5,321.5Z" fill="none" stroke="#1ec878"/><rect x="153.0" y="310.5" width="8" height="8" fill="#ff0000"/><rect x="137.0" y="336.0" width="7" height="7" fill="#ff0000"/><rect x="153.0" y="360.0" width="8" height="8" fill="#ff0000"/><line x1="302" y1="239.5" x2="344" y2="239.5" stroke="#1ec878" stroke-width="1"/><line x1="323.5" y1="239" x2="323.5" y2="270" stroke="#1ec878" stroke-width="1"/><text x="331" y="258" font-family="Liberation Sans" font-size="11" fill="#ff0000" stroke="#ff0000" stroke-width="0.2" textLength="15" lengthAdjust="spacingAndGlyphs">vdd</text><rect x="319.0" y="268.5" width="8" height="8" fill="#ff0000"/><rect x="319.0" y="286.0" width="8" height="8" fill="#ff0000"/><line x1="323.5" y1="276" x2="323.5" y2="287" stroke="#38b0e8" stroke-width="1"/><text x="328" y="299" font-family="Liberation Sans" font-size="11" fill="#1ec878" stroke="#1ec878" stroke-width="0.2" textLength="11" lengthAdjust="spacingAndGlyphs">V0</text><line x1="323.5" y1="294" x2="323.5" y2="305" stroke="#1ec878" stroke-width="1"/><circle cx="323.5" cy="314.5" r="9.5" fill="none" stroke="#1ec878" stroke-width="1" shape-rendering="auto"/><line x1="320.5" y1="310.0" x2="326.5" y2="310.0" stroke="#1ec878" stroke-width="1"/><line x1="324.0" y1="306.5" x2="324.0" y2="313.5" stroke="#1ec878" stroke-width="1"/><line x1="320.5" y1="319.0" x2="326.5" y2="319.0" stroke="#1ec878" stroke-width="1"/><line x1="323.5" y1="324" x2="323.5" y2="336" stroke="#1ec878" stroke-width="1"/><rect x="319.0" y="335.0" width="8" height="8" fill="#ff0000"/><line x1="323.5" y1="343" x2="323.5" y2="368" stroke="#38b0e8" stroke-width="1"/><rect x="319.0" y="368.0" width="8" height="8" fill="#ff0000"/><line x1="323.5" y1="376" x2="323.5" y2="397" stroke="#1ec878" stroke-width="1"/><polyline points="314.5,397.5 332.5,397.5 323.5,406" fill="none" stroke="#1ec878" stroke-width="1"/><line x1="314.5" y1="397.5" x2="323.5" y2="406" stroke="#1ec878"/><text x="332" y="392" font-family="Liberation Sans" font-size="11" fill="#ff0000" stroke="#ff0000" stroke-width="0.2" textLength="15" lengthAdjust="spacingAndGlyphs">gnd</text><text x="335" y="311" font-family="Liberation Sans" font-size="11" fill="#ff9010" stroke="#ff9010" stroke-width="0.2" textLength="66" lengthAdjust="spacingAndGlyphs">i=−787.658u</text><line x1="373" y1="256.5" x2="398" y2="256.5" stroke="#38b0e8" stroke-width="1"/><rect x="369.0" y="252.0" width="8" height="8" fill="#ff0000"/><rect x="394.0" y="252.0" width="8" height="8" fill="#ff0000"/><text x="373" y="255" font-family="Liberation Sans" font-size="11" fill="#f4f400" stroke="#f4f400" stroke-width="0.2" textLength="19" lengthAdjust="spacingAndGlyphs">gndl</text><line x1="373.5" y1="260" x2="373.5" y2="281" stroke="#1ec878" stroke-width="1"/><polyline points="364.5,281.5 382.5,281.5 373.5,290" fill="none" stroke="#1ec878" stroke-width="1"/><line x1="364.5" y1="281.5" x2="373.5" y2="290" stroke="#1ec878"/><text x="382" y="274" font-family="Liberation Sans" font-size="9" fill="#ff0000" stroke="#ff0000" stroke-width="0.2" textLength="16" lengthAdjust="spacingAndGlyphs">gnd</text><text x="389" y="283" font-family="Liberation Sans" font-size="11" fill="#f4f400" stroke="#f4f400" stroke-width="0.2" textLength="21" lengthAdjust="spacingAndGlyphs">net7</text><text x="365" y="228" font-family="Liberation Sans" font-size="11" fill="#f4f400" stroke="#f4f400" stroke-width="0.2" textLength="40" lengthAdjust="spacingAndGlyphs">IND_STD</text><text x="424" y="228" font-family="Liberation Sans" font-size="11" fill="#1ec878" stroke="#1ec878" stroke-width="0.2" textLength="10" lengthAdjust="spacingAndGlyphs">L2</text><text x="391" y="243" font-family="Liberation Sans" font-size="11" fill="#f4f400" stroke="#f4f400" stroke-width="0.2" textLength="18" lengthAdjust="spacingAndGlyphs">vdd!</text><line x1="414.5" y1="206" x2="414.5" y2="227" stroke="#38b0e8" stroke-width="1"/><line x1="414" y1="206.5" x2="450" y2="206.5" stroke="#38b0e8" stroke-width="1"/><line x1="414.5" y1="235" x2="414.5" y2="243" stroke="#1ec878" stroke-width="1"/><path d="M414.5,243 C421.5,243.0 421.5,249.75 414.5,249.75 C421.5,249.75 421.5,256.5 414.5,256.5 C421.5,256.5 421.5,263.25 414.5,263.25 C421.5,263.25 421.5,270.0 414.5,270.0" fill="none" stroke="#1ec878" stroke-width="1"/><line x1="414.5" y1="270" x2="414.5" y2="281" stroke="#1ec878" stroke-width="1"/><path d="M421.5,235.5L424.5,238.5L421.5,241.5L418.5,238.5Z" fill="none" stroke="#1ec878"/><rect x="410.0" y="227.0" width="8" height="8" fill="#ff0000"/><rect x="410.0" y="277.0" width="8" height="8" fill="#ff0000"/><rect x="411" y="279" width="3" height="4" fill="#f4f400"/><line x1="414.5" y1="285" x2="414.5" y2="289" stroke="#38b0e8" stroke-width="1"/><line x1="414" y1="289.5" x2="450" y2="289.5" stroke="#38b0e8" stroke-width="1"/><text x="419" y="195" font-family="Liberation Sans" font-size="11" fill="#ff9010" stroke="#ff9010" stroke-width="0.2" textLength="31" lengthAdjust="spacingAndGlyphs">conne</text><text x="439" y="303" font-family="Liberation Sans" font-size="11" fill="#f4f400" stroke="#f4f400" stroke-width="0.2" textLength="14" lengthAdjust="spacingAndGlyphs">NO</text><text x="443" y="313" font-family="Liberation Sans" font-size="11" fill="#f4f400" stroke="#f4f400" stroke-width="0.2" textLength="8" lengthAdjust="spacingAndGlyphs">1.</text><text x="444" y="326" font-family="Liberation Sans" font-size="11" fill="#f4f400" stroke="#f4f400" stroke-width="0.2" textLength="6" lengthAdjust="spacingAndGlyphs">1</text><text x="426" y="356" font-family="Liberation Sans" font-size="11" fill="#f4f400" stroke="#f4f400" stroke-width="0.2" textLength="26" lengthAdjust="spacingAndGlyphs">639.</text><line x1="364" y1="331.5" x2="450" y2="331.5" stroke="#38b0e8" stroke-width="1"/><line x1="364.5" y1="331" x2="364.5" y2="345" stroke="#38b0e8" stroke-width="1"/><rect x="442.0" y="327.0" width="8" height="8" fill="#ff0000"/><rect x="360.0" y="344.0" width="8" height="8" fill="#ff0000"/><text x="369" y="357" font-family="Liberation Sans" font-size="11" fill="#1ec878" stroke="#1ec878" stroke-width="0.2" textLength="9" lengthAdjust="spacingAndGlyphs">V1</text><line x1="364.5" y1="352" x2="364.5" y2="363" stroke="#1ec878" stroke-width="1"/><circle cx="364.5" cy="372" r="9" fill="none" stroke="#1ec878" stroke-width="1" shape-rendering="auto"/><line x1="361.5" y1="367.5" x2="367.5" y2="367.5" stroke="#1ec878" stroke-width="1"/><line x1="365.0" y1="364" x2="365.0" y2="371" stroke="#1ec878" stroke-width="1"/><line x1="361.5" y1="376.5" x2="367.5" y2="376.5" stroke="#1ec878" stroke-width="1"/><line x1="364.5" y1="381" x2="364.5" y2="393" stroke="#1ec878" stroke-width="1"/><text x="378" y="368" font-family="Liberation Sans" font-size="11" fill="#ff9010" stroke="#ff9010" stroke-width="0.2" textLength="16" lengthAdjust="spacingAndGlyphs">i=0</text><rect x="360.0" y="393.0" width="8" height="8" fill="#ff0000"/><line x1="364.5" y1="401" x2="364.5" y2="409" stroke="#38b0e8" stroke-width="1"/><rect x="360.0" y="409.0" width="8" height="8" fill="#ff0000"/><line x1="364.5" y1="417" x2="364.5" y2="439" stroke="#1ec878" stroke-width="1"/><polyline points="355.5,439.5 373.5,439.5 364.5,448" fill="none" stroke="#1ec878" stroke-width="1"/><line x1="355.5" y1="439.5" x2="364.5" y2="448" stroke="#1ec878"/><text x="373" y="432" font-family="Liberation Sans" font-size="11" fill="#ff0000" stroke="#ff0000" stroke-width="0.2" textLength="15" lengthAdjust="spacingAndGlyphs">gnd</text><text x="439" y="444" font-family="Liberation Sans" font-size="11" fill="#f4f400" stroke="#f4f400" stroke-width="0.2" textLength="14" lengthAdjust="spacingAndGlyphs">NO</text><text x="426" y="456" font-family="Liberation Sans" font-size="11" fill="#f4f400" stroke="#f4f400" stroke-width="0.2" textLength="26" lengthAdjust="spacingAndGlyphs">639.</text><line x1="240" y1="472.5" x2="450" y2="472.5" stroke="#38b0e8" stroke-width="1"/><rect x="323.5" y="455.5" width="49" height="33" fill="none" stroke="#e020e0"/><text transform="translate(318,464) rotate(-90)" font-family="Liberation Sans" font-size="11" fill="#1ec878" stroke="#1ec878" stroke-width="0.2" textLength="10" lengthAdjust="spacingAndGlyphs">L0</text><line x1="327" y1="472.5" x2="335" y2="472.5" stroke="#1ec878" stroke-width="1"/><path d="M335,472.5 C335,465 342,465 342,472 C342,465 349,465 349,472 C349,465 356,465 356,472 C356,465 362,465 362,472.5" fill="none" stroke="#1ec878"/><line x1="362" y1="472.5" x2="369" y2="472.5" stroke="#1ec878" stroke-width="1"/><path d="M330.5,463.5L333.5,466.5L330.5,469.5L327.5,466.5Z" fill="none" stroke="#1ec878"/><rect x="319.0" y="468.0" width="8" height="8" fill="#ff0000"/><rect x="368.0" y="468.0" width="8" height="8" fill="#ff0000"/><rect x="443.0" y="468.0" width="8" height="8" fill="#ff0000"/><circle cx="406" cy="472" r="3.5" fill="#38b0e8" shape-rendering="auto"/><rect x="343.0" y="484.0" width="8" height="8" fill="#ff0000"/><line x1="348.5" y1="492" x2="348.5" y2="580" stroke="#38b0e8" stroke-width="1"/><line x1="348" y1="580.5" x2="450" y2="580.5" stroke="#38b0e8" stroke-width="1"/><text transform="translate(319,522) rotate(-90)" font-family="Liberation Sans" font-size="11" fill="#f4f400" stroke="#f4f400" stroke-width="0.2" textLength="41" lengthAdjust="spacingAndGlyphs">IND_STD</text><text transform="translate(332,505) rotate(-90)" font-family="Liberation Sans" font-size="11" fill="#f4f400" stroke="#f4f400" stroke-width="0.2" textLength="27" lengthAdjust="spacingAndGlyphs">net22</text><text transform="translate(350,515) rotate(-90)" font-family="Liberation Sans" font-size="11" fill="#f4f400" stroke="#f4f400" stroke-width="0.2" textLength="23" lengthAdjust="spacingAndGlyphs">gndl</text><text transform="translate(372,505) rotate(-90)" font-family="Liberation Sans" font-size="11" fill="#f4f400" stroke="#f4f400" stroke-width="0.2" textLength="28" lengthAdjust="spacingAndGlyphs">net33</text><rect x="402.0" y="476.0" width="8" height="8" fill="#ff0000"/><text x="410" y="491" font-family="Liberation Sans" font-size="11" fill="#1ec878" stroke="#1ec878" stroke-width="0.2" textLength="11" lengthAdjust="spacingAndGlyphs">V3</text><line x1="406.5" y1="484" x2="406.5" y2="496" stroke="#1ec878" stroke-width="1"/><circle cx="406.5" cy="505" r="9" fill="none" stroke="#1ec878" stroke-width="1" shape-rendering="auto"/><line x1="403.5" y1="500.5" x2="409.5" y2="500.5" stroke="#1ec878" stroke-width="1"/><line x1="407.0" y1="497" x2="407.0" y2="504" stroke="#1ec878" stroke-width="1"/><line x1="403.5" y1="509.5" x2="409.5" y2="509.5" stroke="#1ec878" stroke-width="1"/><line x1="406.5" y1="514" x2="406.5" y2="527" stroke="#1ec878" stroke-width="1"/><text x="431" y="497" font-family="Liberation Sans" font-size="11" fill="#f4f400" stroke="#f4f400" stroke-width="0.2" textLength="19" lengthAdjust="spacingAndGlyphs">401</text><text x="418" y="502" font-family="Liberation Sans" font-size="11" fill="#ff9010" stroke="#ff9010" stroke-width="0.2" textLength="32" lengthAdjust="spacingAndGlyphs">i=−19</text><rect x="402.0" y="526.5" width="8" height="7" fill="#ff0000"/><rect x="402.0" y="536.5" width="8" height="7" fill="#ff0000"/><line x1="406.5" y1="543" x2="406.5" y2="563" stroke="#1ec878" stroke-width="1"/><polyline points="397.5,563.5 415.5,563.5 406.5,572" fill="none" stroke="#1ec878" stroke-width="1"/><line x1="397.5" y1="563.5" x2="406.5" y2="572" stroke="#1ec878"/><text x="415" y="557" font-family="Liberation Sans" font-size="11" fill="#ff0000" stroke="#ff0000" stroke-width="0.2" textLength="15" lengthAdjust="spacingAndGlyphs">gnd</text><text x="431" y="551" font-family="Liberation Sans" font-size="11" fill="#f4f400" stroke="#f4f400" stroke-width="0.2" textLength="20" lengthAdjust="spacingAndGlyphs">IND_</text><circle cx="439" cy="580" r="3.5" fill="#38b0e8" shape-rendering="auto"/><rect x="435.0" y="584.0" width="8" height="8" fill="#ff0000"/><line x1="439.5" y1="592" x2="439.5" y2="613" stroke="#1ec878" stroke-width="1"/><polyline points="430.5,613.5 448.5,613.5 439.5,622" fill="none" stroke="#1ec878" stroke-width="1"/><line x1="430.5" y1="613.5" x2="439.5" y2="622" stroke="#1ec878"/><text x="439" y="579" font-family="Liberation Sans" font-size="11" fill="#f4f400" stroke="#f4f400" stroke-width="0.2" textLength="11" lengthAdjust="spacingAndGlyphs">gn</text><rect x="448" y="557" width="2" height="6" fill="#f4f400"/><rect x="448" y="602" width="2" height="5" fill="#ff0000"/><rect x="236.0" y="468.0" width="8" height="8" fill="#ff0000"/><text x="253" y="485" font-family="Liberation Sans" font-size="11" fill="#1ec878" stroke="#1ec878" stroke-width="0.2" textLength="31" lengthAdjust="spacingAndGlyphs">PORTØ</text><polyline points="240,476 240,478 244,481 236,486 244,491 236,496 244,501 236,505 240,508" fill="none" stroke="#1ec878" stroke-width="1"/><circle cx="240" cy="518" r="9.5" fill="none" stroke="#1ec878" stroke-width="1" shape-rendering="auto"/><line x1="237" y1="513.5" x2="243" y2="513.5" stroke="#1ec878" stroke-width="1"/><line x1="240.5" y1="510" x2="240.5" y2="517" stroke="#1ec878" stroke-width="1"/><line x1="237" y1="522.5" x2="243" y2="522.5" stroke="#1ec878" stroke-width="1"/><polyline points="211,489 215,481 220,479 223,484 228,486" fill="none" stroke="#1ec878" stroke-width="1"/><polyline points="211,503 216,497 220,502 224,497 228,502" fill="none" stroke="#1ec878" stroke-width="1"/><polyline points="210,514 214,517 219,511 224,511 228,507" fill="none" stroke="#1ec878" stroke-width="1"/><polyline points="211,531 216,531 220,522 224,531 228,531" fill="none" stroke="#1ec878" stroke-width="1"/><line x1="240.5" y1="528" x2="240.5" y2="536" stroke="#1ec878" stroke-width="1"/><rect x="236.0" y="535.5" width="8" height="8" fill="#ff0000"/><line x1="240.5" y1="544" x2="240.5" y2="559" stroke="#38b0e8" stroke-width="1"/><rect x="236.0" y="559.5" width="8" height="8" fill="#ff0000"/><line x1="240.5" y1="568" x2="240.5" y2="590" stroke="#1ec878" stroke-width="1"/><polyline points="231.5,590.5 249.5,590.5 240.5,599" fill="none" stroke="#1ec878" stroke-width="1"/><line x1="231.5" y1="590.5" x2="240.5" y2="599" stroke="#1ec878"/><text x="249" y="582" font-family="Liberation Sans" font-size="11" fill="#ff0000" stroke="#ff0000" stroke-width="0.2" textLength="15" lengthAdjust="spacingAndGlyphs">gnd</text></g></svg>
<div style="left:450px;top:30px;width:513px;height:658px;overflow:hidden;"><div style="left:-450px;top:-30px;width:1040px;height:738px">
<div style="left:450px;top:30px;width:513px;height:658px;background:#ece9e3;border-bottom:1px solid #3a3530"></div>
<div style="left:457px;top:20px;width:483px;height:78px;border-top:1px solid #a09d97;border-left:1px solid #a09d97;border-bottom:1px solid #a09d97;border-right:1px solid #a09d97;box-shadow:1px 1px 0 #fff, inset 1px 1px 0 #fff"></div>
<div class="t b12" style="left:512px;top:44px;">View Name</div>
<div class="t b12" style="left:512px;top:72px;">Instance Name</div>
<div style="left:615px;top:36px;width:244px;height:23px;background:#ece9e3;border-top:1px solid #a09d97;border-left:1px solid #a09d97;border-bottom:1px solid #fff;border-right:1px solid #fff"></div>
<div class="t m11" style="left:619px;top:40px;">symbol</div>
<div style="left:659px;top:38px;width:3px;height:15px;border-left:1px dotted #333;border-right:1px dotted #333"></div>
<div style="left:615px;top:65px;width:244px;height:23px;background:#ece9e3;border-top:1px solid #a09d97;border-left:1px solid #a09d97;border-bottom:1px solid #fff;border-right:1px solid #fff"></div>
<div class="t m11" style="left:619px;top:69px;">L0</div>
<div style="left:632px;top:67px;width:3px;height:15px;border-left:1px dotted #333;border-right:1px dotted #333"></div>
<div style="left:863px;top:36px;width:54px;height:19px;background:#ece9e3;border-top:1px solid #fff;border-left:1px solid #fff;border-bottom:1px solid #a09d97;border-right:1px solid #a09d97"></div>
<div class="t b12" style="left:872px;top:40px;">off</div>
<div style="left:899px;top:44px;width:10px;height:5px;background:#e2dfd9;border-top:1px solid #fff;border-left:1px solid #fff;border-bottom:1px solid #a09d97;border-right:1px solid #a09d97"></div>
<div style="left:863px;top:65px;width:54px;height:19px;background:#ece9e3;border-top:1px solid #fff;border-left:1px solid #fff;border-bottom:1px solid #a09d97;border-right:1px solid #a09d97"></div>
<div class="t b12" style="left:872px;top:69px;">off</div>
<div style="left:899px;top:73px;width:10px;height:5px;background:#e2dfd9;border-top:1px solid #fff;border-left:1px solid #fff;border-bottom:1px solid #a09d97;border-right:1px solid #a09d97"></div>
<div style="left:457px;top:101px;width:483px;height:83px;border-top:1px solid #a09d97;border-left:1px solid #a09d97;border-bottom:1px solid #a09d97;border-right:1px solid #a09d97;box-shadow:1px 1px 0 #fff, inset 1px 1px 0 #fff"></div>
<div style="left:613px;top:103px;width:80px;height:22px;background:#ece9e3;border-top:1px solid #fff;border-left:1px solid #fff;border-bottom:1px solid #a09d97;border-right:1px solid #a09d97"></div>
<div class="t b12" style="left:641px;top:108px;">Add</div>
<div style="left:695px;top:103px;width:80px;height:22px;background:#ece9e3;border-top:1px solid #fff;border-left:1px solid #fff;border-bottom:1px solid #a09d97;border-right:1px solid #a09d97"></div>
<div class="t b12" style="left:715px;top:108px;">Delete</div>
<div style="left:777px;top:103px;width:80px;height:22px;background:#ece9e3;border-top:1px solid #fff;border-left:1px solid #fff;border-bottom:1px solid #a09d97;border-right:1px solid #a09d97"></div>
<div class="t b12" style="left:796px;top:108px;">Modify</div>
<div class="t b12" style="left:512px;top:130px;">User Property</div>
<div class="t b12" style="left:635px;top:130px;">Master Value</div>
<div class="t b12" style="left:766px;top:130px;">Local Value</div>
<div class="t b12" style="left:872px;top:130px;">Display</div>
<div class="t b12" style="left:512px;top:155px;">sitPriorState</div>
<div style="left:614px;top:150px;width:120px;height:23px;background:#c9c6c0;border-top:1px solid #a09d97;border-left:1px solid #a09d97;border-bottom:1px solid #fff;border-right:1px solid #fff"></div>
<div style="left:740px;top:150px;width:119px;height:23px;background:#ece9e3;border-top:1px solid #a09d97;border-left:1px solid #a09d97;border-bottom:1px solid #fff;border-right:1px solid #fff"></div>
<div class="t m11" style="left:744px;top:154px;">30u") (w "15u"))</div>
<div style="left:863px;top:152px;width:54px;height:19px;background:#ece9e3;border-top:1px solid #fff;border-left:1px solid #fff;border-bottom:1px solid #a09d97;border-right:1px solid #a09d97"></div>
<div class="t b12" style="left:872px;top:156px;">off</div>
<div style="left:899px;top:160px;width:10px;height:5px;background:#e2dfd9;border-top:1px solid #fff;border-left:1px solid #fff;border-bottom:1px solid #a09d97;border-right:1px solid #a09d97"></div>
<div style="left:853px;top:152px;width:3px;height:16px;border-left:1px dotted #333;border-right:1px dotted #333"></div>
<div style="left:457px;top:187px;width:483px;height:491px;border-top:1px solid #a09d97;border-left:1px solid #a09d97;border-bottom:1px solid #a09d97;border-right:1px solid #a09d97;box-shadow:1px 1px 0 #fff, inset 1px 1px 0 #fff"></div>
<div class="t b12" style="left:512px;top:197px;">CDF Parameter</div>
<div class="t b12" style="left:720px;top:197px;">Value</div>
<div class="t b12" style="left:872px;top:197px;">Display</div>
<div class="t b12" style="left:462px;top:224px;">Model name</div>
<div style="left:863px;top:218px;width:54px;height:19px;background:#ece9e3;border-top:1px solid #fff;border-left:1px solid #fff;border-bottom:1px solid #a09d97;border-right:1px solid #a09d97"></div>
<div class="t b12" style="left:872px;top:222px;">off</div>
<div style="left:899px;top:226px;width:10px;height:5px;background:#e2dfd9;border-top:1px solid #fff;border-left:1px solid #fff;border-bottom:1px solid #a09d97;border-right:1px solid #a09d97"></div>
<div style="left:640px;top:218px;width:169px;height:23px;background:#c9c6c0;border-top:1px solid #a09d97;border-left:1px solid #a09d97;border-bottom:1px solid #fff;border-right:1px solid #fff"></div>
<div class="t m11" style="left:644px;top:222px;">rf_rf1_L0</div>
<div class="t b12" style="left:462px;top:251px;">Generate Model</div>
<div style="left:863px;top:245px;width:54px;height:19px;background:#ece9e3;border-top:1px solid #fff;border-left:1px solid #fff;border-bottom:1px solid #a09d97;border-right:1px solid #a09d97"></div>
<div class="t b12" style="left:872px;top:249px;">off</div>
<div style="left:899px;top:253px;width:10px;height:5px;background:#e2dfd9;border-top:1px solid #fff;border-left:1px solid #fff;border-bottom:1px solid #a09d97;border-right:1px solid #a09d97"></div>
<div style="left:636px;top:241px;width:47px;height:21px;background:#ece9e3;border-top:1px solid #fff;border-left:1px solid #fff;border-bottom:1px solid #a09d97;border-right:1px solid #a09d97"></div>
<div class="t b12" style="left:640px;top:247px;">NO</div>
<div style="left:665px;top:250px;width:10px;height:5px;background:#e2dfd9;border-top:1px solid #fff;border-left:1px solid #fff;border-bottom:1px solid #a09d97;border-right:1px solid #a09d97"></div>
<div class="t b12" style="left:462px;top:278px;">Model Order</div>
<div style="left:863px;top:272px;width:54px;height:19px;background:#ece9e3;border-top:1px solid #fff;border-left:1px solid #fff;border-bottom:1px solid #a09d97;border-right:1px solid #a09d97"></div>
<div class="t b12" style="left:872px;top:276px;">off</div>
<div style="left:899px;top:280px;width:10px;height:5px;background:#e2dfd9;border-top:1px solid #fff;border-left:1px solid #fff;border-bottom:1px solid #a09d97;border-right:1px solid #a09d97"></div>
<div style="left:636px;top:269px;width:34px;height:20px;background:#ece9e3;border-top:1px solid #fff;border-left:1px solid #fff;border-bottom:1px solid #a09d97;border-right:1px solid #a09d97"></div>
<div class="t b12" style="left:640px;top:275px;">2</div>
<div style="left:652px;top:278px;width:10px;height:5px;background:#e2dfd9;border-top:1px solid #fff;border-left:1px solid #fff;border-bottom:1px solid #a09d97;border-right:1px solid #a09d97"></div>
<div class="t b12" style="left:462px;top:305px;">Proximity Order</div>
<div style="left:863px;top:299px;width:54px;height:19px;background:#ece9e3;border-top:1px solid #fff;border-left:1px solid #fff;border-bottom:1px solid #a09d97;border-right:1px solid #a09d97"></div>
<div class="t b12" style="left:872px;top:303px;">off</div>
<div style="left:899px;top:307px;width:10px;height:5px;background:#e2dfd9;border-top:1px solid #fff;border-left:1px solid #fff;border-bottom:1px solid #a09d97;border-right:1px solid #a09d97"></div>
<div style="left:636px;top:296px;width:34px;height:20px;background:#ece9e3;border-top:1px solid #fff;border-left:1px solid #fff;border-bottom:1px solid #a09d97;border-right:1px solid #a09d97"></div>
<div class="t b12" style="left:640px;top:302px;">1</div>
<div style="left:652px;top:305px;width:10px;height:5px;background:#e2dfd9;border-top:1px solid #fff;border-left:1px solid #fff;border-bottom:1px solid #a09d97;border-right:1px solid #a09d97"></div>
<div class="t b12" style="left:462px;top:332px;">Width</div>
<div style="left:863px;top:326px;width:54px;height:19px;background:#ece9e3;border-top:1px solid #fff;border-left:1px solid #fff;border-bottom:1px solid #a09d97;border-right:1px solid #a09d97"></div>
<div class="t b12" style="left:872px;top:330px;">off</div>
<div style="left:899px;top:334px;width:10px;height:5px;background:#e2dfd9;border-top:1px solid #fff;border-left:1px solid #fff;border-bottom:1px solid #a09d97;border-right:1px solid #a09d97"></div>
<div style="left:640px;top:326px;width:169px;height:23px;background:#ece9e3;border-top:1px solid #a09d97;border-left:1px solid #a09d97;border-bottom:1px solid #fff;border-right:1px solid #fff"></div>
<div class="t m11" style="left:644px;top:330px;">15u M</div>
<div style="left:675px;top:329px;width:3px;height:16px;border-left:1px dotted #333;border-right:1px dotted #333"></div>
<div class="t b12" style="left:462px;top:359px;">Space</div>
<div style="left:863px;top:353px;width:54px;height:19px;background:#ece9e3;border-top:1px solid #fff;border-left:1px solid #fff;border-bottom:1px solid #a09d97;border-right:1px solid #a09d97"></div>
<div class="t b12" style="left:872px;top:357px;">off</div>
<div style="left:899px;top:361px;width:10px;height:5px;background:#e2dfd9;border-top:1px solid #fff;border-left:1px solid #fff;border-bottom:1px solid #a09d97;border-right:1px solid #a09d97"></div>
<div style="left:640px;top:353px;width:169px;height:23px;background:#ece9e3;border-top:1px solid #a09d97;border-left:1px solid #a09d97;border-bottom:1px solid #fff;border-right:1px solid #fff"></div>
<div class="t m11" style="left:644px;top:357px;">2.6u M</div>
<div style="left:682px;top:356px;width:3px;height:16px;border-left:1px dotted #333;border-right:1px dotted #333"></div>
<div class="t b12" style="left:462px;top:386px;">Diameter</div>
<div style="left:863px;top:380px;width:54px;height:19px;background:#ece9e3;border-top:1px solid #fff;border-left:1px solid #fff;border-bottom:1px solid #a09d97;border-right:1px solid #a09d97"></div>
<div class="t b12" style="left:872px;top:384px;">off</div>
<div style="left:899px;top:388px;width:10px;height:5px;background:#e2dfd9;border-top:1px solid #fff;border-left:1px solid #fff;border-bottom:1px solid #a09d97;border-right:1px solid #a09d97"></div>
<div style="left:640px;top:380px;width:169px;height:23px;background:#ece9e3;border-top:1px solid #a09d97;border-left:1px solid #a09d97;border-bottom:1px solid #fff;border-right:1px solid #fff"></div>
<div class="t m11" style="left:644px;top:384px;">60u M</div>
<div style="left:675px;top:383px;width:3px;height:16px;border-left:1px dotted #333;border-right:1px dotted #333"></div>
<div class="t b12" style="left:462px;top:413px;">Number of Turns</div>
<div style="left:863px;top:407px;width:54px;height:19px;background:#ece9e3;border-top:1px solid #fff;border-left:1px solid #fff;border-bottom:1px solid #a09d97;border-right:1px solid #a09d97"></div>
<div class="t b12" style="left:872px;top:411px;">off</div>
<div style="left:899px;top:415px;width:10px;height:5px;background:#e2dfd9;border-top:1px solid #fff;border-left:1px solid #fff;border-bottom:1px solid #a09d97;border-right:1px solid #a09d97"></div>
<div style="left:636px;top:404px;width:47px;height:20px;background:#ece9e3;border-top:1px solid #fff;border-left:1px solid #fff;border-bottom:1px solid #a09d97;border-right:1px solid #a09d97"></div>
<div class="t b12" style="left:640px;top:410px;">1.5</div>
<div style="left:665px;top:413px;width:10px;height:5px;background:#e2dfd9;border-top:1px solid #fff;border-left:1px solid #fff;border-bottom:1px solid #a09d97;border-right:1px solid #a09d97"></div>
<div class="t b12" style="left:462px;top:440px;">Edit Underpass Width</div>
<div style="left:863px;top:434px;width:54px;height:19px;background:#ece9e3;border-top:1px solid #fff;border-left:1px solid #fff;border-bottom:1px solid #a09d97;border-right:1px solid #a09d97"></div>
<div class="t b12" style="left:872px;top:438px;">off</div>
<div style="left:899px;top:442px;width:10px;height:5px;background:#e2dfd9;border-top:1px solid #fff;border-left:1px solid #fff;border-bottom:1px solid #a09d97;border-right:1px solid #a09d97"></div>
<div style="left:642px;top:442px;width:12px;height:12px;background:#ece9e3;border-top:1px solid #fff;border-left:1px solid #fff;border-bottom:1px solid #a09d97;border-right:1px solid #a09d97"></div>
<div class="t b12" style="left:462px;top:467px;">Underpass Width</div>
<div style="left:863px;top:461px;width:54px;height:19px;background:#ece9e3;border-top:1px solid #fff;border-left:1px solid #fff;border-bottom:1px solid #a09d97;border-right:1px solid #a09d97"></div>
<div class="t b12" style="left:872px;top:465px;">off</div>
<div style="left:899px;top:469px;width:10px;height:5px;background:#e2dfd9;border-top:1px solid #fff;border-left:1px solid #fff;border-bottom:1px solid #a09d97;border-right:1px solid #a09d97"></div>
<div style="left:640px;top:461px;width:169px;height:23px;background:#c9c6c0;border-top:1px solid #a09d97;border-left:1px solid #a09d97;border-bottom:1px solid #fff;border-right:1px solid #fff"></div>
<div class="t m11" style="left:644px;top:465px;">30u M</div>
<div class="t b12" style="left:462px;top:494px;">Underpass</div>
<div style="left:863px;top:488px;width:54px;height:19px;background:#ece9e3;border-top:1px solid #fff;border-left:1px solid #fff;border-bottom:1px solid #a09d97;border-right:1px solid #a09d97"></div>
<div class="t b12" style="left:872px;top:492px;">off</div>
<div style="left:899px;top:496px;width:10px;height:5px;background:#e2dfd9;border-top:1px solid #fff;border-left:1px solid #fff;border-bottom:1px solid #a09d97;border-right:1px solid #a09d97"></div>
<svg style="position:absolute;left:640px;top:493px" width="16" height="16"><path d="M8 2L14 8L8 14L2 8Z" fill="#000" stroke="#a09d97"/><path d="M2 8L8 14L14 8" fill="none" stroke="#fff"/></svg>
<div class="t b12" style="left:659px;top:495px;">orthogonal</div>
<svg style="position:absolute;left:729px;top:493px" width="16" height="16"><path d="M8 2L14 8L8 14L2 8Z" fill="#ece9e3" stroke="#fff"/><path d="M2 8L8 14L14 8" fill="none" stroke="#a09d97"/></svg>
<div class="t b12" style="left:747px;top:495px;">parallel</div>
<div class="t b12" style="left:462px;top:521px;">Process</div>
<div style="left:863px;top:515px;width:54px;height:19px;background:#ece9e3;border-top:1px solid #fff;border-left:1px solid #fff;border-bottom:1px solid #a09d97;border-right:1px solid #a09d97"></div>
<div class="t b12" style="left:872px;top:519px;">off</div>
<div style="left:899px;top:523px;width:10px;height:5px;background:#e2dfd9;border-top:1px solid #fff;border-left:1px solid #fff;border-bottom:1px solid #a09d97;border-right:1px solid #a09d97"></div>
<div style="left:640px;top:515px;width:169px;height:23px;background:#c9c6c0;border-top:1px solid #a09d97;border-left:1px solid #a09d97;border-bottom:1px solid #fff;border-right:1px solid #fff"></div>
<div class="t m11" style="left:644px;top:519px;">1P6M</div>
<div class="t b12" style="left:462px;top:548px;">Apply Bulk</div>
<div style="left:863px;top:542px;width:54px;height:19px;background:#ece9e3;border-top:1px solid #fff;border-left:1px solid #fff;border-bottom:1px solid #a09d97;border-right:1px solid #a09d97"></div>
<div class="t b12" style="left:872px;top:546px;">off</div>
<div style="left:899px;top:550px;width:10px;height:5px;background:#e2dfd9;border-top:1px solid #fff;border-left:1px solid #fff;border-bottom:1px solid #a09d97;border-right:1px solid #a09d97"></div>
<div style="left:642px;top:549px;width:12px;height:12px;background:#000;border-top:1px solid #a09d97;border-left:1px solid #a09d97;border-bottom:1px solid #fff;border-right:1px solid #fff"></div>
<div class="t b12" style="left:462px;top:575px;">Slot Location</div>
<div style="left:863px;top:569px;width:54px;height:19px;background:#ece9e3;border-top:1px solid #fff;border-left:1px solid #fff;border-bottom:1px solid #a09d97;border-right:1px solid #a09d97"></div>
<div class="t b12" style="left:872px;top:573px;">off</div>
<div style="left:899px;top:577px;width:10px;height:5px;background:#e2dfd9;border-top:1px solid #fff;border-left:1px solid #fff;border-bottom:1px solid #a09d97;border-right:1px solid #a09d97"></div>
<svg style="position:absolute;left:640px;top:574px" width="16" height="16"><path d="M8 2L14 8L8 14L2 8Z" fill="#000" stroke="#a09d97"/><path d="M2 8L8 14L14 8" fill="none" stroke="#fff"/></svg>
<div class="t b12" style="left:659px;top:576px;">P1</div>
<svg style="position:absolute;left:681px;top:574px" width="16" height="16"><path d="M8 2L14 8L8 14L2 8Z" fill="#ece9e3" stroke="#fff"/><path d="M2 8L8 14L14 8" fill="none" stroke="#a09d97"/></svg>
<div class="t b12" style="left:699px;top:576px;">P2</div>
<div class="t b12" style="left:462px;top:602px;">Inductance</div>
<div style="left:863px;top:596px;width:54px;height:19px;background:#ece9e3;border-top:1px solid #fff;border-left:1px solid #fff;border-bottom:1px solid #a09d97;border-right:1px solid #a09d97"></div>
<div class="t b12" style="left:872px;top:600px;">off</div>
<div style="left:899px;top:604px;width:10px;height:5px;background:#e2dfd9;border-top:1px solid #fff;border-left:1px solid #fff;border-bottom:1px solid #a09d97;border-right:1px solid #a09d97"></div>
<div style="left:640px;top:596px;width:169px;height:23px;background:#c9c6c0;border-top:1px solid #a09d97;border-left:1px solid #a09d97;border-bottom:1px solid #fff;border-right:1px solid #fff"></div>
<div class="t m11" style="left:644px;top:600px;">373.1p H</div>
<div class="t b12" style="left:462px;top:629px;">Resistance</div>
<div style="left:863px;top:623px;width:54px;height:19px;background:#ece9e3;border-top:1px solid #fff;border-left:1px solid #fff;border-bottom:1px solid #a09d97;border-right:1px solid #a09d97"></div>
<div class="t b12" style="left:872px;top:627px;">off</div>
<div style="left:899px;top:631px;width:10px;height:5px;background:#e2dfd9;border-top:1px solid #fff;border-left:1px solid #fff;border-bottom:1px solid #a09d97;border-right:1px solid #a09d97"></div>
<div style="left:640px;top:623px;width:169px;height:23px;background:#c9c6c0;border-top:1px solid #a09d97;border-left:1px solid #a09d97;border-bottom:1px solid #fff;border-right:1px solid #fff"></div>
<div class="t m11" style="left:644px;top:627px;">510m Ohms</div>
<div class="t b12" style="left:462px;top:656px;">Capacitance</div>
<div style="left:863px;top:650px;width:54px;height:19px;background:#ece9e3;border-top:1px solid #fff;border-left:1px solid #fff;border-bottom:1px solid #a09d97;border-right:1px solid #a09d97"></div>
<div class="t b12" style="left:872px;top:654px;">off</div>
<div style="left:899px;top:658px;width:10px;height:5px;background:#e2dfd9;border-top:1px solid #fff;border-left:1px solid #fff;border-bottom:1px solid #a09d97;border-right:1px solid #a09d97"></div>
<div style="left:640px;top:650px;width:169px;height:23px;background:#c9c6c0;border-top:1px solid #a09d97;border-left:1px solid #a09d97;border-bottom:1px solid #fff;border-right:1px solid #fff"></div>
<div class="t m11" style="left:644px;top:654px;">50.2f F</div>
<div style="left:944px;top:30px;width:14px;height:653px;border-left:1px solid #a09d97;border-bottom:1px solid #fff;border-right:1px solid #fff"></div>
<div style="left:945px;top:179px;width:12px;height:490px;border-top:1px solid #fff;border-left:1px solid #fff;border-bottom:1px solid #a09d97;border-right:1px solid #a09d97"></div>
<div style="left:962px;top:30px;width:1px;height:658px;background:#3a3a3a"></div>
</div></div>
<div style="left:962px;top:30px;width:53px;height:658px;background:linear-gradient(#bc3604 0,#be3202 120px,#bc3000 220px,#c03400 330px,#b82c02 420px,#b42a06 515px,#c4401a 545px,#cc4a1e 570px,#b02406 595px,#a41a04 658px)"></div>
<div style="left:1015px;top:30px;width:17px;height:683px;background:#f0f0f0;border-left:1px solid #dcdcdc"></div>
<svg style="position:absolute;left:1015px;top:30px" width="17" height="683"><path d="M4.5,11 L8.5,7 L12.5,11Z" fill="#333"/><path d="M4.5,671.5 L8.5,675.5 L12.5,671.5Z" fill="#333"/></svg>
<div style="left:1016px;top:120px;width:15px;height:573px;background:linear-gradient(90deg,#fdfdfd,#ececec 45%,#d8d8d8 80%,#c8c8c8);border:1px solid #a8a8a8;border-radius:2px"></div>
<div style="left:1020px;top:403px;width:8px;height:1px;background:#555"></div>
<div style="left:1020px;top:406px;width:8px;height:1px;background:#555"></div>
<div style="left:1020px;top:409px;width:8px;height:1px;background:#555"></div>
<div style="left:8px;top:688px;width:1007px;height:25px;background:#ece9e3;border-top:1px solid #f8f6f2"></div>
<div style="left:10px;top:690px;width:21px;height:21px;background:linear-gradient(#f4f2ee,#e2ded6);border:1px solid #b4ac9c;border-radius:3px"></div>
<svg style="position:absolute;left:12px;top:693px" width="17" height="15"><path d="M2,6 L10,1 L15,5 L7,10Z" fill="#2a6ac0" stroke="#333" stroke-width=".8"/><path d="M4,6 L10,2.5 L13,5 L7,8.5Z" fill="#6ac060"/><path d="M1,9 L7,12 L7,14 L1,11Z" fill="#c8c8c8" stroke="#444" stroke-width=".8"/><path d="M0.5,7 L4,5.5 L6,7 L3,9Z" fill="#c89a40"/></svg>
<div style="left:34px;top:691px;width:6px;height:1px;background:#d0c8b8"></div>
<div style="left:34px;top:693px;width:6px;height:1px;background:#d0c8b8"></div>
<div style="left:34px;top:695px;width:6px;height:1px;background:#d0c8b8"></div>
<div style="left:34px;top:697px;width:6px;height:1px;background:#d0c8b8"></div>
<div style="left:34px;top:699px;width:6px;height:1px;background:#d0c8b8"></div>
<div style="left:34px;top:701px;width:6px;height:1px;background:#d0c8b8"></div>
<div style="left:34px;top:703px;width:6px;height:1px;background:#d0c8b8"></div>
<div style="left:34px;top:705px;width:6px;height:1px;background:#d0c8b8"></div>
<div style="left:34px;top:707px;width:6px;height:1px;background:#d0c8b8"></div>
<div style="left:34px;top:709px;width:6px;height:1px;background:#d0c8b8"></div>
<div style="left:43px;top:690px;width:162px;height:22px;background:linear-gradient(#f6f4f0,#ebe8e2);border:1px solid #aca494;border-radius:3px"></div>
<div style="left:50px;top:694px;width:15px;height:13px;background:linear-gradient(#6a6a6a,#2a2a2a);border:1px solid #222;border-radius:2px;box-shadow:inset 0 0 0 1px #999"></div>
<div style="left:53px;top:698px;width:4px;height:1px;background:#ccc"></div>
<div class="t r13" style="left:72px;top:694px;color:#111;font-size:14px;line-height:14px;letter-spacing:0.4px">yzzhai@yumtso:~</div>
<div style="left:207px;top:690px;width:162px;height:22px;background:linear-gradient(#f6f4f0,#ebe8e2);border:1px solid #aca494;border-radius:3px"></div>
<div style="left:215px;top:694px;width:14px;height:14px;background:#fff;border:1px solid #333;border-top:3px solid #3a5a90"></div>
<div class="t r13" style="left:236px;top:694px;color:#111;font-size:14px;line-height:14px;letter-spacing:0.4px">icfb</div>
<div style="left:372px;top:690px;width:163px;height:22px;background:linear-gradient(#f6f4f0,#ebe8e2);border:1px solid #aca494;border-radius:3px"></div>
<div style="left:380px;top:694px;width:14px;height:14px;background:#fff;border:1px solid #333;border-top:3px solid #3a5a90"></div>
<div class="t r13" style="left:401px;top:694px;color:#111;font-size:13px;line-height:14px;letter-spacing:-0.6px;top:695px">2014- 4- 3.1</div>
<div style="left:536px;top:690px;width:163px;height:22px;background:linear-gradient(#f6f4f0,#ebe8e2);border:1px solid #aca494;border-radius:3px"></div>
<div style="left:544px;top:694px;width:14px;height:14px;background:#fff;border:1px solid #333;border-top:3px solid #3a5a90"></div>
<div class="t r13" style="left:565px;top:694px;color:#111;font-size:14px;line-height:14px;letter-spacing:0.2px">Virtuoso® Analog···</div>
<div style="left:901px;top:691px;width:27px;height:20px;background:#f4f6f8;border-top:1px solid #3a6aa8;border-left:2px solid #3a6aa8"></div>
<div style="left:903px;top:695px;width:9px;height:15px;background:#5b9bd8"></div>
<div style="left:913px;top:693px;width:13px;height:17px;background:#92c2f0;border:1px solid #fff"></div>
<div style="left:928px;top:691px;width:26px;height:20px;background:#b3a896"></div>
<div style="left:955px;top:691px;width:26px;height:20px;background:#b3a896"></div>
<div style="left:982px;top:691px;width:26px;height:20px;background:#b3a896"></div>
<div style="left:1010px;top:697px;width:1px;height:8px;background:#666"></div>
<div style="left:8px;top:713px;width:1024px;height:17px;background:#f0f0f0;border-top:1px solid #dcdcdc"></div>
<svg style="position:absolute;left:8px;top:713px" width="1024" height="17"><path d="M11.5,4.5 L7.5,8.5 L11.5,12.5Z" fill="#333"/><path d="M996.5,4.5 L1000.5,8.5 L996.5,12.5Z" fill="#333"/><path d="M1018,15 h1 M1015,15 h1 M1012,15 h1 M1018,12 h1 M1015,12 h1 M1018,9 h1" stroke="#888"/></svg>
<div style="left:26px;top:714px;width:954px;height:15px;background:linear-gradient(#fdfdfd,#ececec 45%,#d8d8d8 80%,#c8c8c8);border:1px solid #a8a8a8;border-radius:2px"></div>
<div style="left:499px;top:718px;width:1px;height:7px;background:#555"></div>
<div style="left:502px;top:718px;width:1px;height:7px;background:#555"></div>
<div style="left:505px;top:718px;width:1px;height:7px;background:#555"></div>
<div style="left:0px;top:29px;width:7px;height:709px;background:linear-gradient(#c6c9cb 0,#c0c3c5 174px,#6e7274 175px,#6a6e70 400px,#8a8d8e 560px,#8e9192 100%)"></div>
<div style="left:0px;top:29px;width:1px;height:709px;background:#4a4e50"></div>
<div style="left:6px;top:29px;width:1px;height:709px;background:#e0e2e4;opacity:.6"></div>
<div style="left:1032px;top:29px;width:8px;height:709px;background:linear-gradient(#c6c9cb 0,#b8bcbe 190px,#5a5e60 191px,#5e6264 300px,#9a9ea0 301px,#a8acae 100%)"></div>
<div style="left:1032px;top:29px;width:1px;height:709px;background:#e0e2e4;opacity:.6"></div>
<div style="left:1039px;top:29px;width:1px;height:709px;background:#3a3e40"></div>
<div style="left:0px;top:730px;width:1040px;height:8px;background:linear-gradient(#d8dadc 0,#d8dadc 1px,#a4a8aa 1px,#8e9294 5px,#6a6e70 7px,#3a3e40 8px);border-radius:0 0 7px 7px"></div>
<svg style="position:absolute;left:944px;top:30px" width="14" height="14"><path d="M2,10 L6.5,1 L11,10" fill="none" stroke="#fff" stroke-dasharray="1,1.4"/><path d="M2,10.5 H12" stroke="#a09d97"/></svg>
<svg style="position:absolute;left:944px;top:669px" width="14" height="14"><path d="M2,2 L6.5,11 L11,2" fill="none" stroke="#fff" stroke-dasharray="1,1.4"/><path d="M7,11 L11,2" fill="none" stroke="#a09d97" stroke-dasharray="1,1.4"/></svg>
<svg style="position:absolute;left:940px;top:549px" width="14" height="20"><path d="M2,1.5 L2,13.5 L4.8,10.8 L7.5,16.8 L9.9,15.8 L7.3,10 L11,10Z" fill="#000" stroke="#fff" stroke-width="1" stroke-linejoin="miter"/></svg>
</div></body></html>
